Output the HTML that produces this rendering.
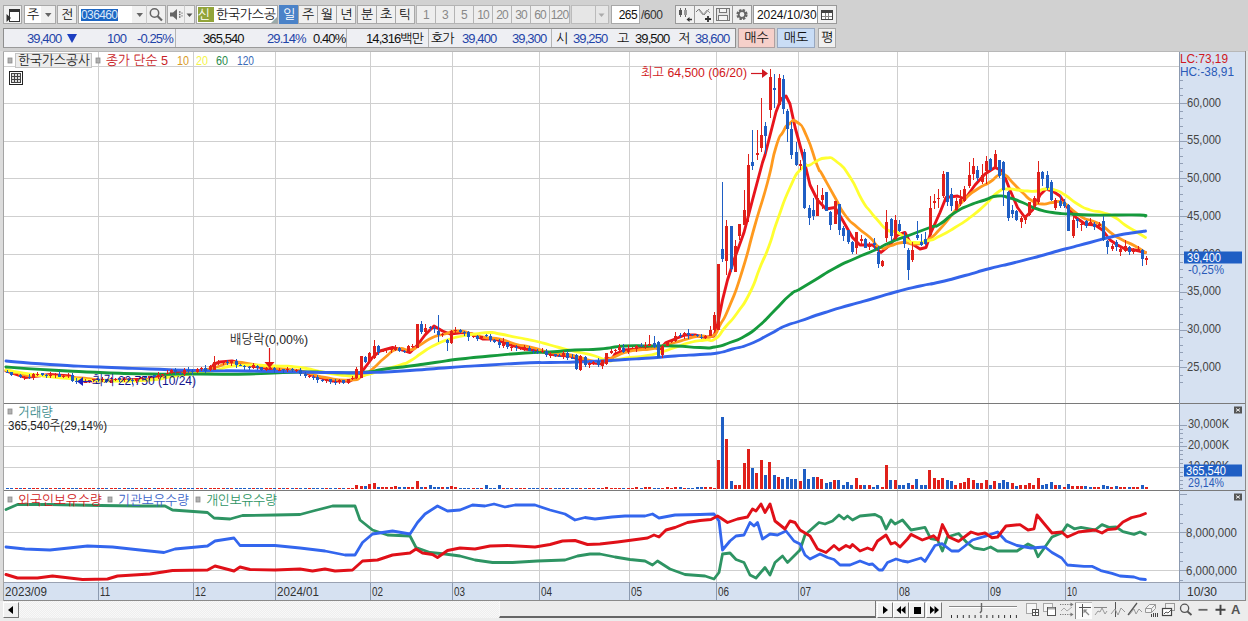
<!DOCTYPE html>
<html lang="ko"><head><meta charset="utf-8"><title>한국가스공사 차트</title>
<style>
html,body{margin:0;padding:0}
body{width:1248px;height:621px;background:#d1d1d1;position:relative;overflow:hidden;font-family:"Liberation Sans","NanumGothic","Noto Sans CJK KR",sans-serif;font-size:12px;color:#111}
.a{position:absolute;box-sizing:border-box;white-space:nowrap}
.btn{background:#f0f0f0;border:1px solid #a8a8a8;text-align:center;line-height:18px;height:19px;top:5px;font-size:13px;overflow:hidden}
.w{background:#fff}
.t2{top:30px;height:18px;line-height:18px;letter-spacing:-0.9px;font-size:13px}
.bl{color:#1f44a8}
</style></head>
<body>
<svg width="1248" height="621" viewBox="0 0 1248 621" style="position:absolute;left:0;top:0" font-family='"Liberation Sans","NanumGothic","Noto Sans CJK KR",sans-serif'><rect x="0" y="51" width="3" height="570" fill="#dcdcdc"/>
<rect x="1246" y="51" width="2" height="570" fill="#e4e4e4"/>
<rect x="3" y="51" width="1243" height="550" fill="#fff"/>
<rect x="1179" y="51" width="66" height="550" fill="#d6e1f1"/>
<rect x="3" y="582" width="1243" height="19" fill="#d6e1f1"/>
<line x1="98.5" y1="52" x2="98.5" y2="582" stroke="#cfcfcf" stroke-width="1"/>
<line x1="98.5" y1="583" x2="98.5" y2="600" stroke="#8c9ab0" stroke-width="1"/>
<line x1="193.5" y1="52" x2="193.5" y2="582" stroke="#cfcfcf" stroke-width="1"/>
<line x1="193.5" y1="583" x2="193.5" y2="600" stroke="#8c9ab0" stroke-width="1"/>
<line x1="275.5" y1="52" x2="275.5" y2="582" stroke="#cfcfcf" stroke-width="1"/>
<line x1="275.5" y1="583" x2="275.5" y2="600" stroke="#8c9ab0" stroke-width="1"/>
<line x1="370.5" y1="52" x2="370.5" y2="582" stroke="#cfcfcf" stroke-width="1"/>
<line x1="370.5" y1="583" x2="370.5" y2="600" stroke="#8c9ab0" stroke-width="1"/>
<line x1="452.5" y1="52" x2="452.5" y2="582" stroke="#cfcfcf" stroke-width="1"/>
<line x1="452.5" y1="583" x2="452.5" y2="600" stroke="#8c9ab0" stroke-width="1"/>
<line x1="539.5" y1="52" x2="539.5" y2="582" stroke="#cfcfcf" stroke-width="1"/>
<line x1="539.5" y1="583" x2="539.5" y2="600" stroke="#8c9ab0" stroke-width="1"/>
<line x1="629.5" y1="52" x2="629.5" y2="582" stroke="#cfcfcf" stroke-width="1"/>
<line x1="629.5" y1="583" x2="629.5" y2="600" stroke="#8c9ab0" stroke-width="1"/>
<line x1="716.5" y1="52" x2="716.5" y2="582" stroke="#cfcfcf" stroke-width="1"/>
<line x1="716.5" y1="583" x2="716.5" y2="600" stroke="#8c9ab0" stroke-width="1"/>
<line x1="798.5" y1="52" x2="798.5" y2="582" stroke="#cfcfcf" stroke-width="1"/>
<line x1="798.5" y1="583" x2="798.5" y2="600" stroke="#8c9ab0" stroke-width="1"/>
<line x1="897.5" y1="52" x2="897.5" y2="582" stroke="#cfcfcf" stroke-width="1"/>
<line x1="897.5" y1="583" x2="897.5" y2="600" stroke="#8c9ab0" stroke-width="1"/>
<line x1="988.5" y1="52" x2="988.5" y2="582" stroke="#cfcfcf" stroke-width="1"/>
<line x1="988.5" y1="583" x2="988.5" y2="600" stroke="#8c9ab0" stroke-width="1"/>
<line x1="1065.5" y1="52" x2="1065.5" y2="582" stroke="#cfcfcf" stroke-width="1"/>
<line x1="1065.5" y1="583" x2="1065.5" y2="600" stroke="#8c9ab0" stroke-width="1"/>
<line x1="4" y1="66.5" x2="1179" y2="66.5" stroke="#cfcfcf" stroke-width="1"/>
<line x1="4" y1="103.5" x2="1179" y2="103.5" stroke="#cfcfcf" stroke-width="1"/>
<line x1="4" y1="141.5" x2="1179" y2="141.5" stroke="#cfcfcf" stroke-width="1"/>
<line x1="4" y1="178.5" x2="1179" y2="178.5" stroke="#cfcfcf" stroke-width="1"/>
<line x1="4" y1="216.5" x2="1179" y2="216.5" stroke="#cfcfcf" stroke-width="1"/>
<line x1="4" y1="254.5" x2="1179" y2="254.5" stroke="#cfcfcf" stroke-width="1"/>
<line x1="4" y1="291.5" x2="1179" y2="291.5" stroke="#cfcfcf" stroke-width="1"/>
<line x1="4" y1="329.5" x2="1179" y2="329.5" stroke="#cfcfcf" stroke-width="1"/>
<line x1="4" y1="366.5" x2="1179" y2="366.5" stroke="#cfcfcf" stroke-width="1"/>
<line x1="4" y1="425.5" x2="1179" y2="425.5" stroke="#cfcfcf" stroke-width="1"/>
<line x1="4" y1="446.5" x2="1179" y2="446.5" stroke="#cfcfcf" stroke-width="1"/>
<line x1="4" y1="467.5" x2="1179" y2="467.5" stroke="#cfcfcf" stroke-width="1"/>
<line x1="4" y1="532.5" x2="1179" y2="532.5" stroke="#cfcfcf" stroke-width="1"/>
<line x1="4" y1="570.5" x2="1179" y2="570.5" stroke="#cfcfcf" stroke-width="1"/>
<line x1="3" y1="403.5" x2="1246" y2="403.5" stroke="#7a7a7a" stroke-width="1"/>
<line x1="3" y1="490.5" x2="1246" y2="490.5" stroke="#7a7a7a" stroke-width="1"/>
<line x1="3" y1="582.5" x2="1246" y2="582.5" stroke="#9aa2b2" stroke-width="1"/>
<line x1="3" y1="600.5" x2="1246" y2="600.5" stroke="#8a8a8a" stroke-width="1"/>
<line x1="3.5" y1="51" x2="3.5" y2="601" stroke="#a4a4a4" stroke-width="1"/>
<line x1="3" y1="51.5" x2="1246" y2="51.5" stroke="#b8b8b8" stroke-width="1"/>
<line x1="1179.5" y1="52" x2="1179.5" y2="601" stroke="#8c9ab0" stroke-width="1"/>
<line x1="1245.5" y1="51" x2="1245.5" y2="601" stroke="#8a8a8a" stroke-width="1"/>
<line x1="1180" y1="382.5" x2="1183" y2="382.5" stroke="#93a0b6" stroke-width="1"/>
<line x1="1180" y1="375.5" x2="1183" y2="375.5" stroke="#93a0b6" stroke-width="1"/>
<line x1="1180" y1="367.5" x2="1187" y2="367.5" stroke="#93a0b6" stroke-width="1"/>
<line x1="1180" y1="360.5" x2="1183" y2="360.5" stroke="#93a0b6" stroke-width="1"/>
<line x1="1180" y1="352.5" x2="1183" y2="352.5" stroke="#93a0b6" stroke-width="1"/>
<line x1="1180" y1="345.5" x2="1183" y2="345.5" stroke="#93a0b6" stroke-width="1"/>
<line x1="1180" y1="337.5" x2="1183" y2="337.5" stroke="#93a0b6" stroke-width="1"/>
<line x1="1180" y1="330.5" x2="1187" y2="330.5" stroke="#93a0b6" stroke-width="1"/>
<line x1="1180" y1="322.5" x2="1183" y2="322.5" stroke="#93a0b6" stroke-width="1"/>
<line x1="1180" y1="314.5" x2="1183" y2="314.5" stroke="#93a0b6" stroke-width="1"/>
<line x1="1180" y1="307.5" x2="1183" y2="307.5" stroke="#93a0b6" stroke-width="1"/>
<line x1="1180" y1="299.5" x2="1183" y2="299.5" stroke="#93a0b6" stroke-width="1"/>
<line x1="1180" y1="292.5" x2="1187" y2="292.5" stroke="#93a0b6" stroke-width="1"/>
<line x1="1180" y1="284.5" x2="1183" y2="284.5" stroke="#93a0b6" stroke-width="1"/>
<line x1="1180" y1="277.5" x2="1183" y2="277.5" stroke="#93a0b6" stroke-width="1"/>
<line x1="1180" y1="269.5" x2="1183" y2="269.5" stroke="#93a0b6" stroke-width="1"/>
<line x1="1180" y1="262.5" x2="1183" y2="262.5" stroke="#93a0b6" stroke-width="1"/>
<line x1="1180" y1="254.5" x2="1187" y2="254.5" stroke="#93a0b6" stroke-width="1"/>
<line x1="1180" y1="246.5" x2="1183" y2="246.5" stroke="#93a0b6" stroke-width="1"/>
<line x1="1180" y1="239.5" x2="1183" y2="239.5" stroke="#93a0b6" stroke-width="1"/>
<line x1="1180" y1="231.5" x2="1183" y2="231.5" stroke="#93a0b6" stroke-width="1"/>
<line x1="1180" y1="224.5" x2="1183" y2="224.5" stroke="#93a0b6" stroke-width="1"/>
<line x1="1180" y1="216.5" x2="1187" y2="216.5" stroke="#93a0b6" stroke-width="1"/>
<line x1="1180" y1="209.5" x2="1183" y2="209.5" stroke="#93a0b6" stroke-width="1"/>
<line x1="1180" y1="201.5" x2="1183" y2="201.5" stroke="#93a0b6" stroke-width="1"/>
<line x1="1180" y1="194.5" x2="1183" y2="194.5" stroke="#93a0b6" stroke-width="1"/>
<line x1="1180" y1="186.5" x2="1183" y2="186.5" stroke="#93a0b6" stroke-width="1"/>
<line x1="1180" y1="178.5" x2="1187" y2="178.5" stroke="#93a0b6" stroke-width="1"/>
<line x1="1180" y1="171.5" x2="1183" y2="171.5" stroke="#93a0b6" stroke-width="1"/>
<line x1="1180" y1="163.5" x2="1183" y2="163.5" stroke="#93a0b6" stroke-width="1"/>
<line x1="1180" y1="156.5" x2="1183" y2="156.5" stroke="#93a0b6" stroke-width="1"/>
<line x1="1180" y1="148.5" x2="1183" y2="148.5" stroke="#93a0b6" stroke-width="1"/>
<line x1="1180" y1="141.5" x2="1187" y2="141.5" stroke="#93a0b6" stroke-width="1"/>
<line x1="1180" y1="133.5" x2="1183" y2="133.5" stroke="#93a0b6" stroke-width="1"/>
<line x1="1180" y1="126.5" x2="1183" y2="126.5" stroke="#93a0b6" stroke-width="1"/>
<line x1="1180" y1="118.5" x2="1183" y2="118.5" stroke="#93a0b6" stroke-width="1"/>
<line x1="1180" y1="111.5" x2="1183" y2="111.5" stroke="#93a0b6" stroke-width="1"/>
<line x1="1180" y1="103.5" x2="1187" y2="103.5" stroke="#93a0b6" stroke-width="1"/>
<line x1="1180" y1="95.5" x2="1183" y2="95.5" stroke="#93a0b6" stroke-width="1"/>
<line x1="1180" y1="88.5" x2="1183" y2="88.5" stroke="#93a0b6" stroke-width="1"/>
<line x1="1180" y1="80.5" x2="1183" y2="80.5" stroke="#93a0b6" stroke-width="1"/>
<line x1="1180" y1="488.5" x2="1183" y2="488.5" stroke="#93a0b6" stroke-width="1"/>
<line x1="1180" y1="484.5" x2="1183" y2="484.5" stroke="#93a0b6" stroke-width="1"/>
<line x1="1180" y1="480.5" x2="1183" y2="480.5" stroke="#93a0b6" stroke-width="1"/>
<line x1="1180" y1="476.5" x2="1183" y2="476.5" stroke="#93a0b6" stroke-width="1"/>
<line x1="1180" y1="472.5" x2="1183" y2="472.5" stroke="#93a0b6" stroke-width="1"/>
<line x1="1180" y1="467.5" x2="1187" y2="467.5" stroke="#93a0b6" stroke-width="1"/>
<line x1="1180" y1="463.5" x2="1183" y2="463.5" stroke="#93a0b6" stroke-width="1"/>
<line x1="1180" y1="459.5" x2="1183" y2="459.5" stroke="#93a0b6" stroke-width="1"/>
<line x1="1180" y1="454.5" x2="1183" y2="454.5" stroke="#93a0b6" stroke-width="1"/>
<line x1="1180" y1="450.5" x2="1183" y2="450.5" stroke="#93a0b6" stroke-width="1"/>
<line x1="1180" y1="446.5" x2="1187" y2="446.5" stroke="#93a0b6" stroke-width="1"/>
<line x1="1180" y1="442.5" x2="1183" y2="442.5" stroke="#93a0b6" stroke-width="1"/>
<line x1="1180" y1="438.5" x2="1183" y2="438.5" stroke="#93a0b6" stroke-width="1"/>
<line x1="1180" y1="433.5" x2="1183" y2="433.5" stroke="#93a0b6" stroke-width="1"/>
<line x1="1180" y1="429.5" x2="1183" y2="429.5" stroke="#93a0b6" stroke-width="1"/>
<line x1="1180" y1="425.5" x2="1187" y2="425.5" stroke="#93a0b6" stroke-width="1"/>
<line x1="1180" y1="580.5" x2="1183" y2="580.5" stroke="#93a0b6" stroke-width="1"/>
<line x1="1180" y1="570.5" x2="1187" y2="570.5" stroke="#93a0b6" stroke-width="1"/>
<line x1="1180" y1="561.5" x2="1183" y2="561.5" stroke="#93a0b6" stroke-width="1"/>
<line x1="1180" y1="552.5" x2="1183" y2="552.5" stroke="#93a0b6" stroke-width="1"/>
<line x1="1180" y1="542.5" x2="1183" y2="542.5" stroke="#93a0b6" stroke-width="1"/>
<line x1="1180" y1="532.5" x2="1187" y2="532.5" stroke="#93a0b6" stroke-width="1"/>
<line x1="1180" y1="523.5" x2="1183" y2="523.5" stroke="#93a0b6" stroke-width="1"/>
<line x1="1180" y1="514.5" x2="1183" y2="514.5" stroke="#93a0b6" stroke-width="1"/>
<line x1="1180" y1="504.5" x2="1183" y2="504.5" stroke="#93a0b6" stroke-width="1"/>
<line x1="1180" y1="494.5" x2="1187" y2="494.5" stroke="#93a0b6" stroke-width="1"/>
<rect x="6.0" y="488" width="3" height="1" fill="#1f5ec4"/>
<rect x="10.0" y="488" width="3" height="1" fill="#1f5ec4"/>
<rect x="15.0" y="488" width="3" height="1" fill="#e0201a"/>
<rect x="19.0" y="488" width="3" height="1" fill="#1f5ec4"/>
<rect x="23.0" y="488" width="3" height="1" fill="#e0201a"/>
<rect x="28.0" y="488" width="3" height="1" fill="#1f5ec4"/>
<rect x="32.0" y="488" width="3" height="1" fill="#e0201a"/>
<rect x="36.0" y="488" width="3" height="1" fill="#e0201a"/>
<rect x="41.0" y="488" width="3" height="1" fill="#1f5ec4"/>
<rect x="45.0" y="488" width="3" height="1" fill="#1f5ec4"/>
<rect x="49.0" y="488" width="3" height="1" fill="#e0201a"/>
<rect x="54.0" y="488" width="3" height="1" fill="#e0201a"/>
<rect x="58.0" y="488" width="3" height="1" fill="#1f5ec4"/>
<rect x="62.0" y="488" width="3" height="1" fill="#e0201a"/>
<rect x="67.0" y="488" width="3" height="1" fill="#e0201a"/>
<rect x="71.0" y="488" width="3" height="1" fill="#1f5ec4"/>
<rect x="75.0" y="488" width="3" height="1" fill="#1f5ec4"/>
<rect x="79.0" y="488" width="3" height="1" fill="#e0201a"/>
<rect x="84.0" y="488" width="3" height="1" fill="#e0201a"/>
<rect x="88.0" y="488" width="3" height="1" fill="#e0201a"/>
<rect x="92.0" y="488" width="3" height="1" fill="#e0201a"/>
<rect x="97.0" y="488" width="3" height="1" fill="#1f5ec4"/>
<rect x="101.0" y="488" width="3" height="1" fill="#e0201a"/>
<rect x="105.0" y="488" width="3" height="1" fill="#1f5ec4"/>
<rect x="110.0" y="488" width="3" height="1" fill="#e0201a"/>
<rect x="114.0" y="488" width="3" height="1" fill="#e0201a"/>
<rect x="118.0" y="488" width="3" height="1" fill="#1f5ec4"/>
<rect x="123.0" y="488" width="3" height="1" fill="#e0201a"/>
<rect x="127.0" y="488" width="3" height="1" fill="#1f5ec4"/>
<rect x="131.0" y="488" width="3" height="1" fill="#1f5ec4"/>
<rect x="135.0" y="488" width="3" height="1" fill="#e0201a"/>
<rect x="140.0" y="488" width="3" height="1" fill="#e0201a"/>
<rect x="144.0" y="488" width="3" height="1" fill="#1f5ec4"/>
<rect x="148.0" y="488" width="3" height="1" fill="#e0201a"/>
<rect x="153.0" y="488" width="3" height="1" fill="#1f5ec4"/>
<rect x="157.0" y="488" width="3" height="1" fill="#e0201a"/>
<rect x="161.0" y="488" width="3" height="1" fill="#e0201a"/>
<rect x="166.0" y="488" width="3" height="1" fill="#e0201a"/>
<rect x="170.0" y="488" width="3" height="1" fill="#e0201a"/>
<rect x="174.0" y="488" width="3" height="1" fill="#1f5ec4"/>
<rect x="179.0" y="488" width="3" height="1" fill="#1f5ec4"/>
<rect x="183.0" y="488" width="3" height="1" fill="#e0201a"/>
<rect x="187.0" y="488" width="3" height="1" fill="#1f5ec4"/>
<rect x="191.0" y="488" width="3" height="1" fill="#1f5ec4"/>
<rect x="196.0" y="488" width="3" height="1" fill="#e0201a"/>
<rect x="200.0" y="488" width="3" height="1" fill="#e0201a"/>
<rect x="204.0" y="488" width="3" height="1" fill="#1f5ec4"/>
<rect x="209.0" y="488" width="3" height="1" fill="#e0201a"/>
<rect x="213.0" y="488" width="3" height="1" fill="#e0201a"/>
<rect x="217.0" y="488" width="3" height="1" fill="#e0201a"/>
<rect x="222.0" y="488" width="3" height="1" fill="#e0201a"/>
<rect x="226.0" y="488" width="3" height="1" fill="#1f5ec4"/>
<rect x="230.0" y="488" width="3" height="1" fill="#e0201a"/>
<rect x="235.0" y="488" width="3" height="1" fill="#1f5ec4"/>
<rect x="239.0" y="488" width="3" height="1" fill="#1f5ec4"/>
<rect x="243.0" y="488" width="3" height="1" fill="#1f5ec4"/>
<rect x="248.0" y="488" width="3" height="1" fill="#1f5ec4"/>
<rect x="252.0" y="488" width="3" height="1" fill="#e0201a"/>
<rect x="256.0" y="488" width="3" height="1" fill="#1f5ec4"/>
<rect x="260.0" y="488" width="3" height="1" fill="#1f5ec4"/>
<rect x="265.0" y="488" width="3" height="1" fill="#e0201a"/>
<rect x="269.0" y="488" width="3" height="1" fill="#e0201a"/>
<rect x="273.0" y="488" width="3" height="1" fill="#1f5ec4"/>
<rect x="278.0" y="488" width="3" height="1" fill="#e0201a"/>
<rect x="282.0" y="488" width="3" height="1" fill="#1f5ec4"/>
<rect x="286.0" y="488" width="3" height="1" fill="#e0201a"/>
<rect x="291.0" y="488" width="3" height="1" fill="#1f5ec4"/>
<rect x="295.0" y="488" width="3" height="1" fill="#e0201a"/>
<rect x="299.0" y="488" width="3" height="1" fill="#1f5ec4"/>
<rect x="304.0" y="488" width="3" height="1" fill="#1f5ec4"/>
<rect x="308.0" y="488" width="3" height="1" fill="#e0201a"/>
<rect x="312.0" y="488" width="3" height="1" fill="#1f5ec4"/>
<rect x="316.0" y="488" width="3" height="1" fill="#1f5ec4"/>
<rect x="321.0" y="488" width="3" height="1" fill="#1f5ec4"/>
<rect x="325.0" y="488" width="3" height="1" fill="#e0201a"/>
<rect x="329.0" y="488" width="3" height="1" fill="#1f5ec4"/>
<rect x="334.0" y="488" width="3" height="1" fill="#1f5ec4"/>
<rect x="338.0" y="488" width="3" height="1" fill="#e0201a"/>
<rect x="342.0" y="488" width="3" height="1" fill="#1f5ec4"/>
<rect x="347.0" y="488" width="3" height="1" fill="#e0201a"/>
<rect x="351.0" y="488" width="3" height="1" fill="#e0201a"/>
<rect x="355.0" y="485" width="3" height="4" fill="#e0201a"/>
<rect x="360.0" y="486" width="3" height="3" fill="#e0201a"/>
<rect x="364.0" y="486" width="3" height="3" fill="#1f5ec4"/>
<rect x="368.0" y="484" width="3" height="5" fill="#e0201a"/>
<rect x="373.0" y="483" width="3" height="6" fill="#e0201a"/>
<rect x="377.0" y="487" width="3" height="2" fill="#1f5ec4"/>
<rect x="381.0" y="487" width="3" height="2" fill="#e0201a"/>
<rect x="385.0" y="487" width="3" height="2" fill="#e0201a"/>
<rect x="390.0" y="487" width="3" height="2" fill="#e0201a"/>
<rect x="394.0" y="486" width="3" height="3" fill="#e0201a"/>
<rect x="398.0" y="487" width="3" height="2" fill="#1f5ec4"/>
<rect x="403.0" y="487" width="3" height="2" fill="#1f5ec4"/>
<rect x="407.0" y="487" width="3" height="2" fill="#e0201a"/>
<rect x="411.0" y="487" width="3" height="2" fill="#e0201a"/>
<rect x="416.0" y="481" width="3" height="8" fill="#e0201a"/>
<rect x="420.0" y="487" width="3" height="2" fill="#1f5ec4"/>
<rect x="424.0" y="487" width="3" height="2" fill="#e0201a"/>
<rect x="429.0" y="485" width="3" height="4" fill="#1f5ec4"/>
<rect x="433.0" y="487" width="3" height="2" fill="#1f5ec4"/>
<rect x="437.0" y="487" width="3" height="2" fill="#1f5ec4"/>
<rect x="441.0" y="487" width="3" height="2" fill="#e0201a"/>
<rect x="446.0" y="487" width="3" height="2" fill="#1f5ec4"/>
<rect x="450.0" y="486" width="3" height="3" fill="#e0201a"/>
<rect x="454.0" y="487" width="3" height="2" fill="#e0201a"/>
<rect x="459.0" y="488" width="3" height="1" fill="#1f5ec4"/>
<rect x="463.0" y="488" width="3" height="1" fill="#1f5ec4"/>
<rect x="467.0" y="488" width="3" height="1" fill="#1f5ec4"/>
<rect x="472.0" y="488" width="3" height="1" fill="#e0201a"/>
<rect x="476.0" y="488" width="3" height="1" fill="#1f5ec4"/>
<rect x="480.0" y="488" width="3" height="1" fill="#e0201a"/>
<rect x="485.0" y="485" width="3" height="4" fill="#1f5ec4"/>
<rect x="489.0" y="488" width="3" height="1" fill="#1f5ec4"/>
<rect x="493.0" y="488" width="3" height="1" fill="#1f5ec4"/>
<rect x="498.0" y="485" width="3" height="4" fill="#1f5ec4"/>
<rect x="502.0" y="488" width="3" height="1" fill="#e0201a"/>
<rect x="506.0" y="488" width="3" height="1" fill="#1f5ec4"/>
<rect x="510.0" y="488" width="3" height="1" fill="#e0201a"/>
<rect x="515.0" y="488" width="3" height="1" fill="#1f5ec4"/>
<rect x="519.0" y="488" width="3" height="1" fill="#e0201a"/>
<rect x="523.0" y="488" width="3" height="1" fill="#e0201a"/>
<rect x="528.0" y="488" width="3" height="1" fill="#1f5ec4"/>
<rect x="532.0" y="488" width="3" height="1" fill="#1f5ec4"/>
<rect x="536.0" y="488" width="3" height="1" fill="#1f5ec4"/>
<rect x="541.0" y="488" width="3" height="1" fill="#e0201a"/>
<rect x="545.0" y="488" width="3" height="1" fill="#1f5ec4"/>
<rect x="549.0" y="488" width="3" height="1" fill="#e0201a"/>
<rect x="554.0" y="488" width="3" height="1" fill="#1f5ec4"/>
<rect x="558.0" y="488" width="3" height="1" fill="#1f5ec4"/>
<rect x="562.0" y="488" width="3" height="1" fill="#e0201a"/>
<rect x="566.0" y="488" width="3" height="1" fill="#1f5ec4"/>
<rect x="571.0" y="488" width="3" height="1" fill="#1f5ec4"/>
<rect x="575.0" y="488" width="3" height="1" fill="#1f5ec4"/>
<rect x="579.0" y="488" width="3" height="1" fill="#e0201a"/>
<rect x="584.0" y="488" width="3" height="1" fill="#1f5ec4"/>
<rect x="588.0" y="488" width="3" height="1" fill="#e0201a"/>
<rect x="592.0" y="488" width="3" height="1" fill="#e0201a"/>
<rect x="597.0" y="488" width="3" height="1" fill="#1f5ec4"/>
<rect x="601.0" y="488" width="3" height="1" fill="#e0201a"/>
<rect x="605.0" y="487" width="3" height="2" fill="#e0201a"/>
<rect x="610.0" y="488" width="3" height="1" fill="#e0201a"/>
<rect x="614.0" y="488" width="3" height="1" fill="#e0201a"/>
<rect x="618.0" y="488" width="3" height="1" fill="#e0201a"/>
<rect x="622.0" y="488" width="3" height="1" fill="#1f5ec4"/>
<rect x="627.0" y="488" width="3" height="1" fill="#e0201a"/>
<rect x="631.0" y="488" width="3" height="1" fill="#e0201a"/>
<rect x="635.0" y="487" width="3" height="2" fill="#e0201a"/>
<rect x="640.0" y="488" width="3" height="1" fill="#1f5ec4"/>
<rect x="644.0" y="487" width="3" height="2" fill="#e0201a"/>
<rect x="648.0" y="487" width="3" height="2" fill="#e0201a"/>
<rect x="653.0" y="488" width="3" height="1" fill="#1f5ec4"/>
<rect x="657.0" y="488" width="3" height="1" fill="#1f5ec4"/>
<rect x="661.0" y="488" width="3" height="1" fill="#e0201a"/>
<rect x="666.0" y="487" width="3" height="2" fill="#e0201a"/>
<rect x="670.0" y="488" width="3" height="1" fill="#e0201a"/>
<rect x="674.0" y="487" width="3" height="2" fill="#e0201a"/>
<rect x="679.0" y="487" width="3" height="2" fill="#1f5ec4"/>
<rect x="683.0" y="488" width="3" height="1" fill="#e0201a"/>
<rect x="687.0" y="488" width="3" height="1" fill="#1f5ec4"/>
<rect x="691.0" y="488" width="3" height="1" fill="#1f5ec4"/>
<rect x="696.0" y="487" width="3" height="2" fill="#1f5ec4"/>
<rect x="700.0" y="487" width="3" height="2" fill="#1f5ec4"/>
<rect x="704.0" y="487" width="3" height="2" fill="#e0201a"/>
<rect x="709.0" y="487" width="3" height="2" fill="#e0201a"/>
<rect x="713.0" y="488" width="3" height="1" fill="#e0201a"/>
<rect x="717.0" y="460" width="3" height="29" fill="#e0201a"/>
<rect x="721.0" y="417" width="3" height="72" fill="#1f5ec4"/>
<rect x="725.0" y="439" width="3" height="50" fill="#e0201a"/>
<rect x="730.0" y="481" width="3" height="8" fill="#1f5ec4"/>
<rect x="734.0" y="485" width="3" height="4" fill="#e0201a"/>
<rect x="738.0" y="485" width="3" height="4" fill="#e0201a"/>
<rect x="743.0" y="463" width="3" height="26" fill="#e0201a"/>
<rect x="747.0" y="449" width="3" height="40" fill="#e0201a"/>
<rect x="751.0" y="468" width="3" height="21" fill="#1f5ec4"/>
<rect x="755.0" y="473" width="3" height="16" fill="#e0201a"/>
<rect x="760.0" y="460" width="3" height="29" fill="#e0201a"/>
<rect x="764.0" y="475" width="3" height="14" fill="#1f5ec4"/>
<rect x="768.0" y="462" width="3" height="27" fill="#e0201a"/>
<rect x="773.0" y="475" width="3" height="14" fill="#1f5ec4"/>
<rect x="777.0" y="477" width="3" height="12" fill="#e0201a"/>
<rect x="781.0" y="479" width="3" height="10" fill="#1f5ec4"/>
<rect x="786.0" y="477" width="3" height="12" fill="#1f5ec4"/>
<rect x="790.0" y="479" width="3" height="10" fill="#1f5ec4"/>
<rect x="794.0" y="479" width="3" height="10" fill="#1f5ec4"/>
<rect x="799.0" y="481" width="3" height="8" fill="#e0201a"/>
<rect x="803.0" y="469" width="3" height="20" fill="#1f5ec4"/>
<rect x="807.0" y="479" width="3" height="10" fill="#1f5ec4"/>
<rect x="812.0" y="477" width="3" height="12" fill="#1f5ec4"/>
<rect x="816.0" y="477" width="3" height="12" fill="#e0201a"/>
<rect x="820.0" y="479" width="3" height="10" fill="#e0201a"/>
<rect x="825.0" y="483" width="3" height="6" fill="#1f5ec4"/>
<rect x="829.0" y="482" width="3" height="7" fill="#1f5ec4"/>
<rect x="833.0" y="480" width="3" height="9" fill="#e0201a"/>
<rect x="837.0" y="480" width="3" height="9" fill="#1f5ec4"/>
<rect x="842.0" y="485" width="3" height="4" fill="#1f5ec4"/>
<rect x="846.0" y="482" width="3" height="7" fill="#1f5ec4"/>
<rect x="850.0" y="485" width="3" height="4" fill="#1f5ec4"/>
<rect x="855.0" y="478" width="3" height="11" fill="#e0201a"/>
<rect x="859.0" y="485" width="3" height="4" fill="#e0201a"/>
<rect x="863.0" y="485" width="3" height="4" fill="#1f5ec4"/>
<rect x="868.0" y="485" width="3" height="4" fill="#e0201a"/>
<rect x="872.0" y="487" width="3" height="2" fill="#1f5ec4"/>
<rect x="876.0" y="485" width="3" height="4" fill="#1f5ec4"/>
<rect x="881.0" y="487" width="3" height="2" fill="#e0201a"/>
<rect x="885.0" y="465" width="3" height="24" fill="#e0201a"/>
<rect x="889.0" y="480" width="3" height="9" fill="#1f5ec4"/>
<rect x="894.0" y="480" width="3" height="9" fill="#e0201a"/>
<rect x="898.0" y="485" width="3" height="4" fill="#1f5ec4"/>
<rect x="902.0" y="485" width="3" height="4" fill="#1f5ec4"/>
<rect x="907.0" y="483" width="3" height="6" fill="#1f5ec4"/>
<rect x="911.0" y="485" width="3" height="4" fill="#e0201a"/>
<rect x="915.0" y="479" width="3" height="10" fill="#1f5ec4"/>
<rect x="920.0" y="485" width="3" height="4" fill="#1f5ec4"/>
<rect x="924.0" y="485" width="3" height="4" fill="#1f5ec4"/>
<rect x="928.0" y="470" width="3" height="19" fill="#e0201a"/>
<rect x="933.0" y="478" width="3" height="11" fill="#e0201a"/>
<rect x="937.0" y="480" width="3" height="9" fill="#e0201a"/>
<rect x="941.0" y="478" width="3" height="11" fill="#e0201a"/>
<rect x="946.0" y="480" width="3" height="9" fill="#1f5ec4"/>
<rect x="950.0" y="481" width="3" height="8" fill="#1f5ec4"/>
<rect x="954.0" y="485" width="3" height="4" fill="#e0201a"/>
<rect x="959.0" y="483" width="3" height="6" fill="#e0201a"/>
<rect x="963.0" y="482" width="3" height="7" fill="#e0201a"/>
<rect x="967.0" y="478" width="3" height="11" fill="#e0201a"/>
<rect x="972.0" y="480" width="3" height="9" fill="#e0201a"/>
<rect x="976.0" y="483" width="3" height="6" fill="#1f5ec4"/>
<rect x="980.0" y="483" width="3" height="6" fill="#e0201a"/>
<rect x="985.0" y="480" width="3" height="9" fill="#e0201a"/>
<rect x="989.0" y="485" width="3" height="4" fill="#1f5ec4"/>
<rect x="993.0" y="481" width="3" height="8" fill="#e0201a"/>
<rect x="998.0" y="483" width="3" height="6" fill="#1f5ec4"/>
<rect x="1002.0" y="480" width="3" height="9" fill="#1f5ec4"/>
<rect x="1006.0" y="482" width="3" height="7" fill="#1f5ec4"/>
<rect x="1011.0" y="483" width="3" height="6" fill="#e0201a"/>
<rect x="1015.0" y="486" width="3" height="3" fill="#1f5ec4"/>
<rect x="1019.0" y="485" width="3" height="4" fill="#e0201a"/>
<rect x="1024.0" y="485" width="3" height="4" fill="#e0201a"/>
<rect x="1028.0" y="483" width="3" height="6" fill="#e0201a"/>
<rect x="1032.0" y="485" width="3" height="4" fill="#e0201a"/>
<rect x="1037.0" y="478" width="3" height="11" fill="#e0201a"/>
<rect x="1041.0" y="485" width="3" height="4" fill="#1f5ec4"/>
<rect x="1045.0" y="484" width="3" height="5" fill="#1f5ec4"/>
<rect x="1050.0" y="482" width="3" height="7" fill="#1f5ec4"/>
<rect x="1054.0" y="485" width="3" height="4" fill="#e0201a"/>
<rect x="1058.0" y="485" width="3" height="4" fill="#1f5ec4"/>
<rect x="1063.0" y="487" width="3" height="2" fill="#e0201a"/>
<rect x="1067.0" y="484" width="3" height="5" fill="#1f5ec4"/>
<rect x="1071.0" y="486" width="3" height="3" fill="#e0201a"/>
<rect x="1076.0" y="486" width="3" height="3" fill="#e0201a"/>
<rect x="1080.0" y="486" width="3" height="3" fill="#e0201a"/>
<rect x="1084.0" y="486" width="3" height="3" fill="#1f5ec4"/>
<rect x="1089.0" y="487" width="3" height="2" fill="#1f5ec4"/>
<rect x="1093.0" y="487" width="3" height="2" fill="#e0201a"/>
<rect x="1097.0" y="487" width="3" height="2" fill="#e0201a"/>
<rect x="1102.0" y="485" width="3" height="4" fill="#1f5ec4"/>
<rect x="1106.0" y="486" width="3" height="3" fill="#1f5ec4"/>
<rect x="1110.0" y="487" width="3" height="2" fill="#e0201a"/>
<rect x="1115.0" y="486" width="3" height="3" fill="#1f5ec4"/>
<rect x="1119.0" y="487" width="3" height="2" fill="#e0201a"/>
<rect x="1123.0" y="487" width="3" height="2" fill="#e0201a"/>
<rect x="1128.0" y="487" width="3" height="2" fill="#1f5ec4"/>
<rect x="1132.0" y="487" width="3" height="2" fill="#e0201a"/>
<rect x="1136.0" y="487" width="3" height="2" fill="#e0201a"/>
<rect x="1141.0" y="485" width="3" height="4" fill="#1f5ec4"/>
<rect x="1145.0" y="487" width="3" height="2" fill="#e0201a"/>
<polyline points="6.0,371.0 25.0,377.5 50.0,374.5 70.0,376.0 82.0,381.0 112.0,380.5 150.0,379.0 175.0,372.5 210.0,370.0 214.0,364.0 220.0,362.0 232.0,361.0 250.0,365.5 270.0,369.0 300.0,371.0 315.0,376.0 332.5,381.0 350.0,381.0 359.0,376.0 362.5,371.0 372.5,357.5 380.0,351.0 392.5,347.5 402.5,350.0 410.0,352.5 417.5,345.0 425.0,335.0 434.0,326.0 442.5,331.0 450.0,334.0 462.5,332.5 472.5,334.0 482.5,339.0 495.0,339.0 507.5,344.0 525.0,349.0 540.0,351.0 555.0,355.0 570.0,356.0 580.0,360.0 590.0,362.5 602.5,364.0 606.0,358.0 612.0,359.0 615.0,354.0 625.0,350.0 637.5,349.0 650.0,346.0 660.0,349.0 666.0,342.5 675.0,339.0 685.0,335.0 695.0,335.0 705.0,337.5 714.0,336.0 717.5,325.0 722.5,300.0 727.5,280.0 734.0,260.0 744.0,232.5 752.5,200.0 762.5,162.5 765.0,155.0 776.0,112.0 781.0,99.0 786.0,96.0 790.0,104.0 795.0,127.0 804.0,160.0 810.0,185.0 817.5,200.0 826.0,209.0 835.0,207.5 842.5,220.0 852.5,237.5 860.0,245.0 872.5,245.0 881.0,252.5 890.0,245.0 897.5,235.0 905.0,232.5 910.0,242.5 920.0,249.0 926.0,247.5 931.0,232.5 940.0,212.5 946.0,197.5 957.5,196.0 965.0,199.0 975.0,185.0 985.0,174.0 995.0,167.5 1002.5,171.0 1010.0,190.0 1017.5,207.5 1025.0,217.5 1032.5,210.0 1040.0,195.0 1046.0,189.0 1052.5,191.0 1060.0,196.0 1067.5,207.5 1076.0,217.5 1085.0,224.0 1095.0,225.0 1102.5,230.0 1110.0,240.0 1117.5,245.0 1125.0,249.0 1135.0,250.0 1145.5,252.5" fill="none" stroke="#e8141c" stroke-width="2.9" stroke-linejoin="round" stroke-linecap="round"/>
<path d="M6.0 370.0C12.3 371.7 10.3 373.0 25.0 375.0C39.7 377.0 31.7 375.0 50.0 376.0C68.3 377.0 59.3 376.5 80.0 378.0C100.7 379.5 88.7 380.0 112.0 380.5C135.3 381.0 129.0 381.3 150.0 379.5C171.0 377.7 158.3 377.8 175.0 375.0C191.7 372.2 186.7 373.5 200.0 371.0C213.3 368.5 204.3 370.3 215.0 367.5C225.7 364.7 220.3 363.7 232.0 362.5C243.7 361.3 237.3 362.3 250.0 364.0C262.7 365.7 253.3 365.2 270.0 367.5C286.7 369.8 281.7 367.7 300.0 371.0C318.3 374.3 308.3 374.5 325.0 377.5C341.7 380.5 337.5 380.5 350.0 380.0C362.5 379.5 355.0 379.7 362.5 376.0C370.0 372.3 365.0 375.2 372.5 369.0C380.0 362.8 376.7 364.2 385.0 357.5C393.3 350.8 389.2 351.5 397.5 349.0C405.8 346.5 402.5 351.3 410.0 350.0C417.5 348.7 412.5 349.2 420.0 345.0C427.5 340.8 424.2 341.2 432.5 337.5C440.8 333.8 436.7 336.2 445.0 334.0C453.3 331.8 448.3 331.0 457.5 331.0C466.7 331.0 463.3 331.8 472.5 334.0C481.7 336.2 475.8 335.8 485.0 337.5C494.2 339.2 490.0 336.8 500.0 339.0C510.0 341.2 504.2 341.2 515.0 344.0C525.8 346.8 520.8 344.7 532.5 347.5C544.2 350.3 537.5 350.0 550.0 352.5C562.5 355.0 558.3 352.8 570.0 355.0C581.7 357.2 575.0 356.8 585.0 359.0C595.0 361.2 590.8 362.0 600.0 361.5C609.2 361.0 604.2 360.5 612.5 357.5C620.8 354.5 616.7 355.0 625.0 352.5C633.3 350.0 629.2 351.2 637.5 350.0C645.8 348.8 641.7 350.3 650.0 349.0C658.3 347.7 654.2 348.2 662.5 346.0C670.8 343.8 666.7 344.8 675.0 342.5C683.3 340.2 679.2 341.2 687.5 339.0C695.8 336.8 691.7 337.0 700.0 336.0C708.3 335.0 705.8 339.7 712.5 336.0C719.2 332.3 714.2 335.3 720.0 325.0C725.8 314.7 722.5 323.3 730.0 305.0C737.5 286.7 734.2 296.7 742.5 270.0C750.8 243.3 746.7 254.2 755.0 225.0C763.3 195.8 760.5 208.5 767.5 182.5C774.5 156.5 770.8 163.8 776.0 147.0C781.2 130.2 778.7 139.7 783.0 132.0C787.3 124.3 784.2 127.2 789.0 124.0C793.8 120.8 791.5 118.2 797.5 122.5C803.5 126.8 800.5 122.8 807.0 137.0C813.5 151.2 811.8 152.3 817.0 165.0C822.2 177.7 816.5 164.2 822.5 175.0C828.5 185.8 827.5 184.2 835.0 197.5C842.5 210.8 837.5 205.0 845.0 215.0C852.5 225.0 849.2 220.0 857.5 227.5C865.8 235.0 862.5 230.8 870.0 237.5C877.5 244.2 873.3 244.7 880.0 247.5C886.7 250.3 882.5 247.7 890.0 246.0C897.5 244.3 894.2 243.2 902.5 242.5C910.8 241.8 906.7 244.8 915.0 244.0C923.3 243.2 919.2 245.0 927.5 240.0C935.8 235.0 931.7 237.7 940.0 229.0C948.3 220.3 944.2 224.0 952.5 214.0C960.8 204.0 956.7 207.3 965.0 199.0C973.3 190.7 969.2 194.7 977.5 189.0C985.8 183.3 982.9 186.7 990.0 182.0C997.1 177.3 993.8 177.3 998.8 175.0C1003.8 172.7 1000.4 172.5 1005.0 175.0C1009.6 177.5 1006.7 176.7 1012.5 182.5C1018.3 188.3 1015.8 186.3 1022.5 192.5C1029.2 198.7 1025.8 197.2 1032.5 201.0C1039.2 204.8 1035.8 203.5 1042.5 204.0C1049.2 204.5 1045.8 203.0 1052.5 202.5C1059.2 202.0 1055.8 200.0 1062.5 202.5C1069.2 205.0 1065.8 205.0 1072.5 210.0C1079.2 215.0 1075.8 213.8 1082.5 217.5C1089.2 221.2 1085.8 218.2 1092.5 221.0C1099.2 223.8 1095.8 221.7 1102.5 226.0C1109.2 230.3 1105.8 229.3 1112.5 234.0C1119.2 238.7 1115.0 236.0 1122.5 240.0C1130.0 244.0 1127.3 241.8 1135.0 246.0C1142.7 250.2 1142.0 250.3 1145.5 252.5" fill="none" stroke="#ff9a1e" stroke-width="2.8" stroke-linejoin="round" stroke-linecap="round"/>
<path d="M6.0 370.0C16.5 371.7 14.5 372.0 37.5 375.0C60.5 378.0 50.2 377.0 75.0 379.0C99.8 381.0 87.0 380.7 112.0 381.0C137.0 381.3 129.0 381.7 150.0 380.0C171.0 378.3 154.3 379.0 175.0 376.0C195.7 373.0 191.3 374.5 212.0 371.0C232.7 367.5 216.0 367.2 237.0 365.5C258.0 363.8 254.0 365.3 275.0 366.0C296.0 366.7 283.3 365.3 300.0 367.5C316.7 369.7 308.3 369.7 325.0 372.5C341.7 375.3 336.7 375.2 350.0 376.0C363.3 376.8 354.2 377.0 365.0 375.0C375.8 373.0 370.8 373.3 382.5 370.0C394.2 366.7 390.8 368.0 400.0 365.0C409.2 362.0 402.5 365.2 410.0 361.0C417.5 356.8 414.2 357.8 422.5 352.5C430.8 347.2 425.8 349.5 435.0 345.0C444.2 340.5 440.8 342.0 450.0 339.0C459.2 336.0 454.2 337.7 462.5 336.0C470.8 334.3 465.8 335.2 475.0 334.0C484.2 332.8 481.7 332.5 490.0 332.5C498.3 332.5 490.8 332.3 500.0 334.0C509.2 335.7 505.8 335.2 517.5 337.5C529.2 339.8 524.2 338.5 535.0 341.0C545.8 343.5 540.0 342.3 550.0 345.0C560.0 347.7 555.0 346.5 565.0 349.0C575.0 351.5 570.0 350.2 580.0 352.5C590.0 354.8 586.0 353.3 595.0 356.0C604.0 358.7 600.3 359.2 607.0 360.5C613.7 361.8 607.3 361.0 615.0 360.0C622.7 359.0 620.0 358.8 630.0 357.5C640.0 356.2 635.0 357.7 645.0 356.0C655.0 354.3 650.0 355.3 660.0 352.5C670.0 349.7 665.0 350.8 675.0 347.5C685.0 344.2 680.0 345.0 690.0 342.5C700.0 340.0 696.7 341.2 705.0 340.0C713.3 338.8 708.3 343.2 715.0 339.0C721.7 334.8 717.5 336.3 725.0 327.5C732.5 318.7 729.2 324.2 737.5 312.5C745.8 300.8 742.5 307.5 750.0 292.5C757.5 277.5 753.7 283.0 760.0 267.5C766.3 252.0 763.2 261.8 769.0 246.0C774.8 230.2 770.5 239.5 777.5 220.0C784.5 200.5 782.2 204.5 790.0 187.5C797.8 170.5 794.3 176.5 801.0 169.0C807.7 161.5 805.3 167.3 810.0 165.0C814.7 162.7 809.7 164.3 815.0 162.0C820.3 159.7 818.7 158.0 826.0 158.0C833.3 158.0 829.0 155.7 837.0 162.0C845.0 168.3 841.7 164.3 850.0 177.0C858.3 189.7 855.3 188.7 862.0 200.0C868.7 211.3 864.8 204.3 870.0 211.0C875.2 217.7 871.7 213.7 877.5 220.0C883.3 226.3 880.8 225.8 887.5 230.0C894.2 234.2 890.8 229.2 897.5 232.5C904.2 235.8 901.7 236.7 907.5 240.0C913.3 243.3 908.3 242.2 915.0 242.5C921.7 242.8 919.2 243.2 927.5 241.0C935.8 238.8 930.8 240.5 940.0 236.0C949.2 231.5 945.0 233.7 955.0 227.5C965.0 221.3 960.0 225.0 970.0 217.5C980.0 210.0 975.8 213.3 985.0 205.0C994.2 196.7 990.0 197.8 997.5 192.5C1005.0 187.2 1000.8 189.8 1007.5 189.0C1014.2 188.2 1010.8 189.3 1017.5 190.0C1024.2 190.7 1020.8 190.7 1027.5 191.0C1034.2 191.3 1031.7 191.7 1037.5 191.0C1043.3 190.3 1039.2 189.3 1045.0 189.0C1050.8 188.7 1048.3 188.0 1055.0 190.0C1061.7 192.0 1057.5 190.3 1065.0 195.0C1072.5 199.7 1069.2 199.0 1077.5 204.0C1085.8 209.0 1081.7 207.2 1090.0 210.0C1098.3 212.8 1094.2 210.0 1102.5 212.5C1110.8 215.0 1107.5 213.3 1115.0 217.5C1122.5 221.7 1118.3 220.5 1125.0 225.0C1131.7 229.5 1128.2 226.8 1135.0 231.0C1141.8 235.2 1142.0 235.3 1145.5 237.5" fill="none" stroke="#ffff30" stroke-width="2.8" stroke-linejoin="round" stroke-linecap="round"/>
<path d="M6.0 367.0C20.7 368.0 18.7 368.2 50.0 370.0C81.3 371.8 66.7 371.2 100.0 372.5C133.3 373.8 116.7 373.5 150.0 374.0C183.3 374.5 166.7 374.0 200.0 374.0C233.3 374.0 216.7 374.7 250.0 374.0C283.3 373.3 273.3 372.5 300.0 372.0C326.7 371.5 309.2 372.3 330.0 372.5C350.8 372.7 344.2 373.7 362.5 372.5C380.8 371.3 369.2 371.2 385.0 369.0C400.8 366.8 393.3 368.2 410.0 366.0C426.7 363.8 418.3 364.8 435.0 362.5C451.7 360.2 441.7 361.2 460.0 359.0C478.3 356.8 468.3 358.0 490.0 356.0C511.7 354.0 505.0 354.3 525.0 353.0C545.0 351.7 533.3 353.0 550.0 352.0C566.7 351.0 558.3 351.0 575.0 350.0C591.7 349.0 583.3 350.3 600.0 349.0C616.7 347.7 608.3 347.0 625.0 346.0C641.7 345.0 633.3 346.0 650.0 346.0C666.7 346.0 658.3 345.5 675.0 346.0C691.7 346.5 686.7 347.2 700.0 347.5C713.3 347.8 705.0 348.7 715.0 347.0C725.0 345.3 720.0 346.2 730.0 342.5C740.0 338.8 735.0 341.8 745.0 336.0C755.0 330.2 750.0 333.7 760.0 325.0C770.0 316.3 765.0 320.0 775.0 310.0C785.0 300.0 781.7 302.0 790.0 295.0C798.3 288.0 791.7 294.0 800.0 289.0C808.3 284.0 803.3 287.0 815.0 280.0C826.7 273.0 821.7 275.2 835.0 268.0C848.3 260.8 841.7 264.5 855.0 258.5C868.3 252.5 863.3 255.3 875.0 250.0C886.7 244.7 878.3 247.5 890.0 242.5C901.7 237.5 896.7 240.0 910.0 235.0C923.3 230.0 920.0 231.2 930.0 227.5C940.0 223.8 931.7 229.0 940.0 224.0C948.3 219.0 945.0 218.8 955.0 212.5C965.0 206.2 960.0 209.2 970.0 205.0C980.0 200.8 975.8 203.0 985.0 200.0C994.2 197.0 989.2 196.7 997.5 196.0C1005.8 195.3 1001.7 195.8 1010.0 198.0C1018.3 200.2 1013.3 198.8 1022.5 202.5C1031.7 206.2 1027.5 205.7 1037.5 209.0C1047.5 212.3 1041.7 210.8 1052.5 212.5C1063.3 214.2 1057.5 213.2 1070.0 214.0C1082.5 214.8 1075.0 214.7 1090.0 215.0C1105.0 215.3 1098.3 215.0 1115.0 215.0C1131.7 215.0 1129.8 214.7 1140.0 215.0C1150.2 215.3 1143.7 215.7 1145.5 216.0" fill="none" stroke="#159a3c" stroke-width="2.9" stroke-linejoin="round" stroke-linecap="round"/>
<path d="M6.0 361.0C20.7 362.2 18.7 362.5 50.0 364.5C81.3 366.5 66.7 365.5 100.0 367.0C133.3 368.5 116.7 367.8 150.0 369.0C183.3 370.2 166.7 369.8 200.0 370.5C233.3 371.2 216.7 370.5 250.0 371.0C283.3 371.5 272.5 371.5 300.0 372.0C327.5 372.5 309.2 372.3 332.5 372.5C355.8 372.7 344.2 373.2 370.0 372.5C395.8 371.8 383.3 372.2 410.0 370.5C436.7 368.8 423.3 369.3 450.0 367.5C476.7 365.7 465.0 366.5 490.0 365.0C515.0 363.5 505.0 363.8 525.0 363.0C545.0 362.2 533.3 362.8 550.0 362.5C566.7 362.2 558.3 362.5 575.0 362.0C591.7 361.5 583.3 361.8 600.0 361.0C616.7 360.2 608.3 360.5 625.0 359.5C641.7 358.5 633.3 359.2 650.0 358.0C666.7 356.8 658.3 357.2 675.0 356.0C691.7 354.8 685.8 355.5 700.0 354.5C714.2 353.5 706.7 354.8 717.5 353.0C728.3 351.2 721.7 352.0 732.5 349.0C743.3 346.0 737.5 349.0 750.0 344.0C762.5 339.0 758.3 340.0 770.0 334.0C781.7 328.0 775.0 330.3 785.0 326.0C795.0 321.7 786.7 325.5 800.0 321.0C813.3 316.5 808.3 317.8 825.0 312.5C841.7 307.2 833.3 309.8 850.0 305.0C866.7 300.2 859.2 302.5 875.0 298.0C890.8 293.5 882.5 295.5 897.5 291.5C912.5 287.5 905.8 289.2 920.0 286.0C934.2 282.8 925.0 285.5 940.0 282.0C955.0 278.5 948.3 280.0 965.0 275.5C981.7 271.0 973.3 272.8 990.0 268.5C1006.7 264.2 998.3 266.7 1015.0 262.5C1031.7 258.3 1023.3 260.5 1040.0 256.0C1056.7 251.5 1048.3 253.5 1065.0 249.0C1081.7 244.5 1073.3 246.8 1090.0 242.5C1106.7 238.2 1100.0 239.3 1115.0 236.0C1130.0 232.7 1124.8 234.2 1135.0 232.5C1145.2 230.8 1142.0 231.5 1145.5 231.0" fill="none" stroke="#3464ea" stroke-width="2.9" stroke-linejoin="round" stroke-linecap="round"/>
<line x1="7.5" y1="370" x2="7.5" y2="373" stroke="#1f5ec4" stroke-width="1"/>
<rect x="6.0" y="372" width="3" height="1" fill="#1f5ec4"/>
<line x1="11.5" y1="372" x2="11.5" y2="376" stroke="#1f5ec4" stroke-width="1"/>
<rect x="10.0" y="372" width="3" height="3" fill="#1f5ec4"/>
<line x1="16.5" y1="374" x2="16.5" y2="375" stroke="#e0201a" stroke-width="1"/>
<rect x="15.0" y="374" width="3" height="1" fill="#e0201a"/>
<line x1="20.5" y1="374" x2="20.5" y2="378" stroke="#1f5ec4" stroke-width="1"/>
<rect x="19.0" y="375" width="3" height="2" fill="#1f5ec4"/>
<line x1="24.5" y1="376" x2="24.5" y2="380" stroke="#e0201a" stroke-width="1"/>
<rect x="23.0" y="377" width="3" height="1" fill="#e0201a"/>
<line x1="29.5" y1="374" x2="29.5" y2="379" stroke="#1f5ec4" stroke-width="1"/>
<rect x="28.0" y="377" width="3" height="1" fill="#1f5ec4"/>
<line x1="33.5" y1="373" x2="33.5" y2="380" stroke="#e0201a" stroke-width="1"/>
<rect x="32.0" y="374" width="3" height="4" fill="#e0201a"/>
<line x1="37.5" y1="372" x2="37.5" y2="376" stroke="#e0201a" stroke-width="1"/>
<rect x="36.0" y="374" width="3" height="1" fill="#e0201a"/>
<line x1="42.5" y1="373" x2="42.5" y2="376" stroke="#1f5ec4" stroke-width="1"/>
<rect x="41.0" y="373" width="3" height="2" fill="#1f5ec4"/>
<line x1="46.5" y1="374" x2="46.5" y2="378" stroke="#1f5ec4" stroke-width="1"/>
<rect x="45.0" y="375" width="3" height="1" fill="#1f5ec4"/>
<line x1="50.5" y1="372" x2="50.5" y2="378" stroke="#e0201a" stroke-width="1"/>
<rect x="49.0" y="375" width="3" height="1" fill="#e0201a"/>
<line x1="55.5" y1="373" x2="55.5" y2="378" stroke="#e0201a" stroke-width="1"/>
<rect x="54.0" y="374" width="3" height="1" fill="#e0201a"/>
<line x1="59.5" y1="371" x2="59.5" y2="377" stroke="#1f5ec4" stroke-width="1"/>
<rect x="58.0" y="374" width="3" height="3" fill="#1f5ec4"/>
<line x1="63.5" y1="375" x2="63.5" y2="378" stroke="#e0201a" stroke-width="1"/>
<rect x="62.0" y="376" width="3" height="1" fill="#e0201a"/>
<line x1="68.5" y1="373" x2="68.5" y2="378" stroke="#e0201a" stroke-width="1"/>
<rect x="67.0" y="375" width="3" height="1" fill="#e0201a"/>
<line x1="72.5" y1="373" x2="72.5" y2="382" stroke="#1f5ec4" stroke-width="1"/>
<rect x="71.0" y="375" width="3" height="6" fill="#1f5ec4"/>
<line x1="76.5" y1="378" x2="76.5" y2="384" stroke="#1f5ec4" stroke-width="1"/>
<rect x="75.0" y="381" width="3" height="1" fill="#1f5ec4"/>
<line x1="80.5" y1="381" x2="80.5" y2="384" stroke="#e0201a" stroke-width="1"/>
<rect x="79.0" y="381" width="3" height="1" fill="#e0201a"/>
<line x1="85.5" y1="379" x2="85.5" y2="383" stroke="#e0201a" stroke-width="1"/>
<rect x="84.0" y="382" width="3" height="1" fill="#e0201a"/>
<line x1="89.5" y1="380" x2="89.5" y2="383" stroke="#e0201a" stroke-width="1"/>
<rect x="88.0" y="380" width="3" height="2" fill="#e0201a"/>
<line x1="93.5" y1="379" x2="93.5" y2="382" stroke="#e0201a" stroke-width="1"/>
<rect x="92.0" y="379" width="3" height="1" fill="#e0201a"/>
<line x1="98.5" y1="378" x2="98.5" y2="382" stroke="#1f5ec4" stroke-width="1"/>
<rect x="97.0" y="379" width="3" height="1" fill="#1f5ec4"/>
<line x1="102.5" y1="377" x2="102.5" y2="382" stroke="#e0201a" stroke-width="1"/>
<rect x="101.0" y="379" width="3" height="1" fill="#e0201a"/>
<line x1="106.5" y1="379" x2="106.5" y2="383" stroke="#1f5ec4" stroke-width="1"/>
<rect x="105.0" y="379" width="3" height="3" fill="#1f5ec4"/>
<line x1="111.5" y1="377" x2="111.5" y2="383" stroke="#e0201a" stroke-width="1"/>
<rect x="110.0" y="380" width="3" height="3" fill="#e0201a"/>
<line x1="115.5" y1="378" x2="115.5" y2="381" stroke="#e0201a" stroke-width="1"/>
<rect x="114.0" y="379" width="3" height="1" fill="#e0201a"/>
<line x1="119.5" y1="378" x2="119.5" y2="382" stroke="#1f5ec4" stroke-width="1"/>
<rect x="118.0" y="378" width="3" height="2" fill="#1f5ec4"/>
<line x1="124.5" y1="377" x2="124.5" y2="382" stroke="#e0201a" stroke-width="1"/>
<rect x="123.0" y="379" width="3" height="1" fill="#e0201a"/>
<line x1="128.5" y1="378" x2="128.5" y2="381" stroke="#1f5ec4" stroke-width="1"/>
<rect x="127.0" y="379" width="3" height="1" fill="#1f5ec4"/>
<line x1="132.5" y1="378" x2="132.5" y2="384" stroke="#1f5ec4" stroke-width="1"/>
<rect x="131.0" y="380" width="3" height="1" fill="#1f5ec4"/>
<line x1="136.5" y1="379" x2="136.5" y2="383" stroke="#e0201a" stroke-width="1"/>
<rect x="135.0" y="379" width="3" height="2" fill="#e0201a"/>
<line x1="141.5" y1="377" x2="141.5" y2="379" stroke="#e0201a" stroke-width="1"/>
<rect x="140.0" y="377" width="3" height="1" fill="#e0201a"/>
<line x1="145.5" y1="377" x2="145.5" y2="379" stroke="#1f5ec4" stroke-width="1"/>
<rect x="144.0" y="377" width="3" height="1" fill="#1f5ec4"/>
<line x1="149.5" y1="376" x2="149.5" y2="380" stroke="#e0201a" stroke-width="1"/>
<rect x="148.0" y="376" width="3" height="2" fill="#e0201a"/>
<line x1="154.5" y1="375" x2="154.5" y2="378" stroke="#1f5ec4" stroke-width="1"/>
<rect x="153.0" y="375" width="3" height="2" fill="#1f5ec4"/>
<line x1="158.5" y1="372" x2="158.5" y2="379" stroke="#e0201a" stroke-width="1"/>
<rect x="157.0" y="375" width="3" height="2" fill="#e0201a"/>
<line x1="162.5" y1="374" x2="162.5" y2="376" stroke="#e0201a" stroke-width="1"/>
<rect x="161.0" y="374" width="3" height="1" fill="#e0201a"/>
<line x1="167.5" y1="370" x2="167.5" y2="374" stroke="#e0201a" stroke-width="1"/>
<rect x="166.0" y="373" width="3" height="1" fill="#e0201a"/>
<line x1="171.5" y1="369" x2="171.5" y2="374" stroke="#e0201a" stroke-width="1"/>
<rect x="170.0" y="370" width="3" height="3" fill="#e0201a"/>
<line x1="175.5" y1="368" x2="175.5" y2="375" stroke="#1f5ec4" stroke-width="1"/>
<rect x="174.0" y="370" width="3" height="2" fill="#1f5ec4"/>
<line x1="180.5" y1="372" x2="180.5" y2="375" stroke="#1f5ec4" stroke-width="1"/>
<rect x="179.0" y="373" width="3" height="1" fill="#1f5ec4"/>
<line x1="184.5" y1="368" x2="184.5" y2="376" stroke="#e0201a" stroke-width="1"/>
<rect x="183.0" y="370" width="3" height="4" fill="#e0201a"/>
<line x1="188.5" y1="367" x2="188.5" y2="373" stroke="#1f5ec4" stroke-width="1"/>
<rect x="187.0" y="370" width="3" height="1" fill="#1f5ec4"/>
<line x1="192.5" y1="369" x2="192.5" y2="375" stroke="#1f5ec4" stroke-width="1"/>
<rect x="191.0" y="371" width="3" height="1" fill="#1f5ec4"/>
<line x1="197.5" y1="368" x2="197.5" y2="373" stroke="#e0201a" stroke-width="1"/>
<rect x="196.0" y="369" width="3" height="3" fill="#e0201a"/>
<line x1="201.5" y1="367" x2="201.5" y2="371" stroke="#e0201a" stroke-width="1"/>
<rect x="200.0" y="368" width="3" height="1" fill="#e0201a"/>
<line x1="205.5" y1="365" x2="205.5" y2="373" stroke="#1f5ec4" stroke-width="1"/>
<rect x="204.0" y="368" width="3" height="3" fill="#1f5ec4"/>
<line x1="210.5" y1="365" x2="210.5" y2="371" stroke="#e0201a" stroke-width="1"/>
<rect x="209.0" y="366" width="3" height="4" fill="#e0201a"/>
<line x1="214.5" y1="356" x2="214.5" y2="370" stroke="#e0201a" stroke-width="1"/>
<rect x="213.0" y="362" width="3" height="8" fill="#e0201a"/>
<line x1="218.5" y1="360" x2="218.5" y2="365" stroke="#e0201a" stroke-width="1"/>
<rect x="217.0" y="362" width="3" height="1" fill="#e0201a"/>
<line x1="223.5" y1="362" x2="223.5" y2="365" stroke="#e0201a" stroke-width="1"/>
<rect x="222.0" y="362" width="3" height="1" fill="#e0201a"/>
<line x1="227.5" y1="360" x2="227.5" y2="365" stroke="#1f5ec4" stroke-width="1"/>
<rect x="226.0" y="362" width="3" height="1" fill="#1f5ec4"/>
<line x1="231.5" y1="360" x2="231.5" y2="366" stroke="#e0201a" stroke-width="1"/>
<rect x="230.0" y="361" width="3" height="2" fill="#e0201a"/>
<line x1="236.5" y1="359" x2="236.5" y2="368" stroke="#1f5ec4" stroke-width="1"/>
<rect x="235.0" y="361" width="3" height="4" fill="#1f5ec4"/>
<line x1="240.5" y1="364" x2="240.5" y2="366" stroke="#1f5ec4" stroke-width="1"/>
<rect x="239.0" y="365" width="3" height="1" fill="#1f5ec4"/>
<line x1="244.5" y1="365" x2="244.5" y2="370" stroke="#1f5ec4" stroke-width="1"/>
<rect x="243.0" y="366" width="3" height="1" fill="#1f5ec4"/>
<line x1="249.5" y1="366" x2="249.5" y2="370" stroke="#1f5ec4" stroke-width="1"/>
<rect x="248.0" y="367" width="3" height="1" fill="#1f5ec4"/>
<line x1="253.5" y1="363" x2="253.5" y2="369" stroke="#e0201a" stroke-width="1"/>
<rect x="252.0" y="365" width="3" height="3" fill="#e0201a"/>
<line x1="257.5" y1="365" x2="257.5" y2="370" stroke="#1f5ec4" stroke-width="1"/>
<rect x="256.0" y="366" width="3" height="2" fill="#1f5ec4"/>
<line x1="261.5" y1="367" x2="261.5" y2="371" stroke="#1f5ec4" stroke-width="1"/>
<rect x="260.0" y="367" width="3" height="3" fill="#1f5ec4"/>
<line x1="266.5" y1="367" x2="266.5" y2="371" stroke="#e0201a" stroke-width="1"/>
<rect x="265.0" y="368" width="3" height="2" fill="#e0201a"/>
<line x1="270.5" y1="367" x2="270.5" y2="370" stroke="#e0201a" stroke-width="1"/>
<rect x="269.0" y="368" width="3" height="1" fill="#e0201a"/>
<line x1="274.5" y1="367" x2="274.5" y2="373" stroke="#1f5ec4" stroke-width="1"/>
<rect x="273.0" y="368" width="3" height="2" fill="#1f5ec4"/>
<line x1="279.5" y1="368" x2="279.5" y2="371" stroke="#e0201a" stroke-width="1"/>
<rect x="278.0" y="370" width="3" height="1" fill="#e0201a"/>
<line x1="283.5" y1="369" x2="283.5" y2="373" stroke="#1f5ec4" stroke-width="1"/>
<rect x="282.0" y="369" width="3" height="1" fill="#1f5ec4"/>
<line x1="287.5" y1="367" x2="287.5" y2="372" stroke="#e0201a" stroke-width="1"/>
<rect x="286.0" y="369" width="3" height="1" fill="#e0201a"/>
<line x1="292.5" y1="368" x2="292.5" y2="372" stroke="#1f5ec4" stroke-width="1"/>
<rect x="291.0" y="369" width="3" height="1" fill="#1f5ec4"/>
<line x1="296.5" y1="369" x2="296.5" y2="372" stroke="#e0201a" stroke-width="1"/>
<rect x="295.0" y="370" width="3" height="1" fill="#e0201a"/>
<line x1="300.5" y1="368" x2="300.5" y2="376" stroke="#1f5ec4" stroke-width="1"/>
<rect x="299.0" y="370" width="3" height="4" fill="#1f5ec4"/>
<line x1="305.5" y1="372" x2="305.5" y2="378" stroke="#1f5ec4" stroke-width="1"/>
<rect x="304.0" y="374" width="3" height="2" fill="#1f5ec4"/>
<line x1="309.5" y1="375" x2="309.5" y2="378" stroke="#e0201a" stroke-width="1"/>
<rect x="308.0" y="376" width="3" height="1" fill="#e0201a"/>
<line x1="313.5" y1="375" x2="313.5" y2="380" stroke="#1f5ec4" stroke-width="1"/>
<rect x="312.0" y="377" width="3" height="1" fill="#1f5ec4"/>
<line x1="317.5" y1="375" x2="317.5" y2="383" stroke="#1f5ec4" stroke-width="1"/>
<rect x="316.0" y="377" width="3" height="3" fill="#1f5ec4"/>
<line x1="322.5" y1="379" x2="322.5" y2="382" stroke="#1f5ec4" stroke-width="1"/>
<rect x="321.0" y="380" width="3" height="1" fill="#1f5ec4"/>
<line x1="326.5" y1="379" x2="326.5" y2="383" stroke="#e0201a" stroke-width="1"/>
<rect x="325.0" y="379" width="3" height="2" fill="#e0201a"/>
<line x1="330.5" y1="379" x2="330.5" y2="384" stroke="#1f5ec4" stroke-width="1"/>
<rect x="329.0" y="379" width="3" height="3" fill="#1f5ec4"/>
<line x1="335.5" y1="379" x2="335.5" y2="385" stroke="#1f5ec4" stroke-width="1"/>
<rect x="334.0" y="382" width="3" height="1" fill="#1f5ec4"/>
<line x1="339.5" y1="379" x2="339.5" y2="384" stroke="#e0201a" stroke-width="1"/>
<rect x="338.0" y="380" width="3" height="2" fill="#e0201a"/>
<line x1="343.5" y1="380" x2="343.5" y2="384" stroke="#1f5ec4" stroke-width="1"/>
<rect x="342.0" y="380" width="3" height="3" fill="#1f5ec4"/>
<line x1="348.5" y1="379" x2="348.5" y2="384" stroke="#e0201a" stroke-width="1"/>
<rect x="347.0" y="379" width="3" height="4" fill="#e0201a"/>
<line x1="352.5" y1="376" x2="352.5" y2="380" stroke="#e0201a" stroke-width="1"/>
<rect x="351.0" y="378" width="3" height="1" fill="#e0201a"/>
<line x1="356.5" y1="367" x2="356.5" y2="379" stroke="#e0201a" stroke-width="1"/>
<rect x="355.0" y="369" width="3" height="9" fill="#e0201a"/>
<line x1="361.5" y1="356" x2="361.5" y2="378" stroke="#e0201a" stroke-width="1"/>
<rect x="360.0" y="356" width="3" height="22" fill="#e0201a"/>
<line x1="365.5" y1="356" x2="365.5" y2="363" stroke="#1f5ec4" stroke-width="1"/>
<rect x="364.0" y="357" width="3" height="5" fill="#1f5ec4"/>
<line x1="369.5" y1="352" x2="369.5" y2="363" stroke="#e0201a" stroke-width="1"/>
<rect x="368.0" y="353" width="3" height="9" fill="#e0201a"/>
<line x1="374.5" y1="340" x2="374.5" y2="359" stroke="#e0201a" stroke-width="1"/>
<rect x="373.0" y="346" width="3" height="12" fill="#e0201a"/>
<line x1="378.5" y1="345" x2="378.5" y2="355" stroke="#1f5ec4" stroke-width="1"/>
<rect x="377.0" y="346" width="3" height="6" fill="#1f5ec4"/>
<line x1="382.5" y1="349" x2="382.5" y2="352" stroke="#e0201a" stroke-width="1"/>
<rect x="381.0" y="349" width="3" height="3" fill="#e0201a"/>
<line x1="386.5" y1="348" x2="386.5" y2="353" stroke="#e0201a" stroke-width="1"/>
<rect x="385.0" y="349" width="3" height="1" fill="#e0201a"/>
<line x1="391.5" y1="349" x2="391.5" y2="353" stroke="#e0201a" stroke-width="1"/>
<rect x="390.0" y="349" width="3" height="1" fill="#e0201a"/>
<line x1="395.5" y1="345" x2="395.5" y2="351" stroke="#e0201a" stroke-width="1"/>
<rect x="394.0" y="347" width="3" height="3" fill="#e0201a"/>
<line x1="399.5" y1="347" x2="399.5" y2="352" stroke="#1f5ec4" stroke-width="1"/>
<rect x="398.0" y="348" width="3" height="3" fill="#1f5ec4"/>
<line x1="404.5" y1="350" x2="404.5" y2="353" stroke="#1f5ec4" stroke-width="1"/>
<rect x="403.0" y="351" width="3" height="1" fill="#1f5ec4"/>
<line x1="408.5" y1="345" x2="408.5" y2="353" stroke="#e0201a" stroke-width="1"/>
<rect x="407.0" y="346" width="3" height="6" fill="#e0201a"/>
<line x1="412.5" y1="344" x2="412.5" y2="348" stroke="#e0201a" stroke-width="1"/>
<rect x="411.0" y="346" width="3" height="1" fill="#e0201a"/>
<line x1="417.5" y1="324" x2="417.5" y2="348" stroke="#e0201a" stroke-width="1"/>
<rect x="416.0" y="324" width="3" height="24" fill="#e0201a"/>
<line x1="421.5" y1="321" x2="421.5" y2="334" stroke="#1f5ec4" stroke-width="1"/>
<rect x="420.0" y="324" width="3" height="8" fill="#1f5ec4"/>
<line x1="425.5" y1="324" x2="425.5" y2="333" stroke="#e0201a" stroke-width="1"/>
<rect x="424.0" y="328" width="3" height="4" fill="#e0201a"/>
<line x1="430.5" y1="326" x2="430.5" y2="331" stroke="#1f5ec4" stroke-width="1"/>
<rect x="429.0" y="327" width="3" height="1" fill="#1f5ec4"/>
<line x1="434.5" y1="326" x2="434.5" y2="333" stroke="#1f5ec4" stroke-width="1"/>
<rect x="433.0" y="328" width="3" height="1" fill="#1f5ec4"/>
<line x1="438.5" y1="315" x2="438.5" y2="342" stroke="#1f5ec4" stroke-width="1"/>
<rect x="437.0" y="331" width="3" height="4" fill="#1f5ec4"/>
<line x1="442.5" y1="333" x2="442.5" y2="337" stroke="#e0201a" stroke-width="1"/>
<rect x="441.0" y="334" width="3" height="1" fill="#e0201a"/>
<line x1="447.5" y1="339" x2="447.5" y2="351" stroke="#1f5ec4" stroke-width="1"/>
<rect x="446.0" y="340" width="3" height="3" fill="#1f5ec4"/>
<line x1="451.5" y1="330" x2="451.5" y2="344" stroke="#e0201a" stroke-width="1"/>
<rect x="450.0" y="331" width="3" height="12" fill="#e0201a"/>
<line x1="455.5" y1="327" x2="455.5" y2="334" stroke="#e0201a" stroke-width="1"/>
<rect x="454.0" y="330" width="3" height="1" fill="#e0201a"/>
<line x1="460.5" y1="329" x2="460.5" y2="333" stroke="#1f5ec4" stroke-width="1"/>
<rect x="459.0" y="330" width="3" height="2" fill="#1f5ec4"/>
<line x1="464.5" y1="331" x2="464.5" y2="336" stroke="#1f5ec4" stroke-width="1"/>
<rect x="463.0" y="332" width="3" height="1" fill="#1f5ec4"/>
<line x1="468.5" y1="331" x2="468.5" y2="341" stroke="#1f5ec4" stroke-width="1"/>
<rect x="467.0" y="332" width="3" height="5" fill="#1f5ec4"/>
<line x1="473.5" y1="336" x2="473.5" y2="338" stroke="#e0201a" stroke-width="1"/>
<rect x="472.0" y="336" width="3" height="1" fill="#e0201a"/>
<line x1="477.5" y1="335" x2="477.5" y2="341" stroke="#1f5ec4" stroke-width="1"/>
<rect x="476.0" y="336" width="3" height="3" fill="#1f5ec4"/>
<line x1="481.5" y1="336" x2="481.5" y2="340" stroke="#e0201a" stroke-width="1"/>
<rect x="480.0" y="336" width="3" height="2" fill="#e0201a"/>
<line x1="486.5" y1="334" x2="486.5" y2="337" stroke="#1f5ec4" stroke-width="1"/>
<rect x="485.0" y="335" width="3" height="1" fill="#1f5ec4"/>
<line x1="490.5" y1="334" x2="490.5" y2="342" stroke="#1f5ec4" stroke-width="1"/>
<rect x="489.0" y="336" width="3" height="4" fill="#1f5ec4"/>
<line x1="494.5" y1="339" x2="494.5" y2="343" stroke="#1f5ec4" stroke-width="1"/>
<rect x="493.0" y="340" width="3" height="2" fill="#1f5ec4"/>
<line x1="499.5" y1="339" x2="499.5" y2="348" stroke="#1f5ec4" stroke-width="1"/>
<rect x="498.0" y="342" width="3" height="3" fill="#1f5ec4"/>
<line x1="503.5" y1="338" x2="503.5" y2="348" stroke="#e0201a" stroke-width="1"/>
<rect x="502.0" y="342" width="3" height="4" fill="#e0201a"/>
<line x1="507.5" y1="342" x2="507.5" y2="349" stroke="#1f5ec4" stroke-width="1"/>
<rect x="506.0" y="342" width="3" height="5" fill="#1f5ec4"/>
<line x1="511.5" y1="344" x2="511.5" y2="351" stroke="#e0201a" stroke-width="1"/>
<rect x="510.0" y="347" width="3" height="1" fill="#e0201a"/>
<line x1="516.5" y1="345" x2="516.5" y2="351" stroke="#1f5ec4" stroke-width="1"/>
<rect x="515.0" y="347" width="3" height="1" fill="#1f5ec4"/>
<line x1="520.5" y1="347" x2="520.5" y2="350" stroke="#e0201a" stroke-width="1"/>
<rect x="519.0" y="348" width="3" height="1" fill="#e0201a"/>
<line x1="524.5" y1="345" x2="524.5" y2="351" stroke="#e0201a" stroke-width="1"/>
<rect x="523.0" y="347" width="3" height="1" fill="#e0201a"/>
<line x1="529.5" y1="346" x2="529.5" y2="351" stroke="#1f5ec4" stroke-width="1"/>
<rect x="528.0" y="348" width="3" height="3" fill="#1f5ec4"/>
<line x1="533.5" y1="349" x2="533.5" y2="354" stroke="#1f5ec4" stroke-width="1"/>
<rect x="532.0" y="351" width="3" height="1" fill="#1f5ec4"/>
<line x1="537.5" y1="349" x2="537.5" y2="354" stroke="#1f5ec4" stroke-width="1"/>
<rect x="536.0" y="352" width="3" height="1" fill="#1f5ec4"/>
<line x1="542.5" y1="348" x2="542.5" y2="353" stroke="#e0201a" stroke-width="1"/>
<rect x="541.0" y="351" width="3" height="1" fill="#e0201a"/>
<line x1="546.5" y1="349" x2="546.5" y2="357" stroke="#1f5ec4" stroke-width="1"/>
<rect x="545.0" y="351" width="3" height="4" fill="#1f5ec4"/>
<line x1="550.5" y1="352" x2="550.5" y2="358" stroke="#e0201a" stroke-width="1"/>
<rect x="549.0" y="355" width="3" height="1" fill="#e0201a"/>
<line x1="555.5" y1="354" x2="555.5" y2="357" stroke="#1f5ec4" stroke-width="1"/>
<rect x="554.0" y="354" width="3" height="2" fill="#1f5ec4"/>
<line x1="559.5" y1="354" x2="559.5" y2="357" stroke="#1f5ec4" stroke-width="1"/>
<rect x="558.0" y="356" width="3" height="1" fill="#1f5ec4"/>
<line x1="563.5" y1="351" x2="563.5" y2="359" stroke="#e0201a" stroke-width="1"/>
<rect x="562.0" y="353" width="3" height="4" fill="#e0201a"/>
<line x1="567.5" y1="351" x2="567.5" y2="360" stroke="#1f5ec4" stroke-width="1"/>
<rect x="566.0" y="353" width="3" height="5" fill="#1f5ec4"/>
<line x1="572.5" y1="354" x2="572.5" y2="359" stroke="#1f5ec4" stroke-width="1"/>
<rect x="571.0" y="358" width="3" height="1" fill="#1f5ec4"/>
<line x1="576.5" y1="354" x2="576.5" y2="370" stroke="#1f5ec4" stroke-width="1"/>
<rect x="575.0" y="355" width="3" height="14" fill="#1f5ec4"/>
<line x1="580.5" y1="355" x2="580.5" y2="371" stroke="#e0201a" stroke-width="1"/>
<rect x="579.0" y="356" width="3" height="14" fill="#e0201a"/>
<line x1="585.5" y1="356" x2="585.5" y2="367" stroke="#1f5ec4" stroke-width="1"/>
<rect x="584.0" y="357" width="3" height="8" fill="#1f5ec4"/>
<line x1="589.5" y1="362" x2="589.5" y2="368" stroke="#e0201a" stroke-width="1"/>
<rect x="588.0" y="363" width="3" height="2" fill="#e0201a"/>
<line x1="593.5" y1="361" x2="593.5" y2="365" stroke="#e0201a" stroke-width="1"/>
<rect x="592.0" y="362" width="3" height="1" fill="#e0201a"/>
<line x1="598.5" y1="358" x2="598.5" y2="367" stroke="#1f5ec4" stroke-width="1"/>
<rect x="597.0" y="361" width="3" height="4" fill="#1f5ec4"/>
<line x1="602.5" y1="360" x2="602.5" y2="369" stroke="#e0201a" stroke-width="1"/>
<rect x="601.0" y="360" width="3" height="6" fill="#e0201a"/>
<line x1="606.5" y1="353" x2="606.5" y2="365" stroke="#e0201a" stroke-width="1"/>
<rect x="605.0" y="353" width="3" height="11" fill="#e0201a"/>
<line x1="611.5" y1="349" x2="611.5" y2="354" stroke="#e0201a" stroke-width="1"/>
<rect x="610.0" y="351" width="3" height="2" fill="#e0201a"/>
<line x1="615.5" y1="349" x2="615.5" y2="354" stroke="#e0201a" stroke-width="1"/>
<rect x="614.0" y="350" width="3" height="1" fill="#e0201a"/>
<line x1="619.5" y1="344" x2="619.5" y2="351" stroke="#e0201a" stroke-width="1"/>
<rect x="618.0" y="347" width="3" height="3" fill="#e0201a"/>
<line x1="623.5" y1="344" x2="623.5" y2="353" stroke="#1f5ec4" stroke-width="1"/>
<rect x="622.0" y="348" width="3" height="4" fill="#1f5ec4"/>
<line x1="628.5" y1="345" x2="628.5" y2="354" stroke="#e0201a" stroke-width="1"/>
<rect x="627.0" y="349" width="3" height="3" fill="#e0201a"/>
<line x1="632.5" y1="347" x2="632.5" y2="349" stroke="#e0201a" stroke-width="1"/>
<rect x="631.0" y="348" width="3" height="1" fill="#e0201a"/>
<line x1="636.5" y1="345" x2="636.5" y2="352" stroke="#e0201a" stroke-width="1"/>
<rect x="635.0" y="346" width="3" height="3" fill="#e0201a"/>
<line x1="641.5" y1="343" x2="641.5" y2="347" stroke="#1f5ec4" stroke-width="1"/>
<rect x="640.0" y="345" width="3" height="1" fill="#1f5ec4"/>
<line x1="645.5" y1="342" x2="645.5" y2="349" stroke="#e0201a" stroke-width="1"/>
<rect x="644.0" y="345" width="3" height="1" fill="#e0201a"/>
<line x1="649.5" y1="335" x2="649.5" y2="346" stroke="#e0201a" stroke-width="1"/>
<rect x="648.0" y="344" width="3" height="2" fill="#e0201a"/>
<line x1="654.5" y1="336" x2="654.5" y2="348" stroke="#1f5ec4" stroke-width="1"/>
<rect x="653.0" y="343" width="3" height="4" fill="#1f5ec4"/>
<line x1="658.5" y1="341" x2="658.5" y2="358" stroke="#1f5ec4" stroke-width="1"/>
<rect x="657.0" y="342" width="3" height="16" fill="#1f5ec4"/>
<line x1="662.5" y1="345" x2="662.5" y2="358" stroke="#e0201a" stroke-width="1"/>
<rect x="661.0" y="346" width="3" height="9" fill="#e0201a"/>
<line x1="667.5" y1="341" x2="667.5" y2="346" stroke="#e0201a" stroke-width="1"/>
<rect x="666.0" y="342" width="3" height="4" fill="#e0201a"/>
<line x1="671.5" y1="339" x2="671.5" y2="343" stroke="#e0201a" stroke-width="1"/>
<rect x="670.0" y="341" width="3" height="1" fill="#e0201a"/>
<line x1="675.5" y1="332" x2="675.5" y2="342" stroke="#e0201a" stroke-width="1"/>
<rect x="674.0" y="336" width="3" height="5" fill="#e0201a"/>
<line x1="680.5" y1="333" x2="680.5" y2="338" stroke="#1f5ec4" stroke-width="1"/>
<rect x="679.0" y="335" width="3" height="1" fill="#1f5ec4"/>
<line x1="684.5" y1="332" x2="684.5" y2="339" stroke="#e0201a" stroke-width="1"/>
<rect x="683.0" y="333" width="3" height="2" fill="#e0201a"/>
<line x1="688.5" y1="329" x2="688.5" y2="339" stroke="#1f5ec4" stroke-width="1"/>
<rect x="687.0" y="333" width="3" height="2" fill="#1f5ec4"/>
<line x1="692.5" y1="334" x2="692.5" y2="336" stroke="#1f5ec4" stroke-width="1"/>
<rect x="691.0" y="334" width="3" height="1" fill="#1f5ec4"/>
<line x1="697.5" y1="334" x2="697.5" y2="337" stroke="#1f5ec4" stroke-width="1"/>
<rect x="696.0" y="335" width="3" height="1" fill="#1f5ec4"/>
<line x1="701.5" y1="334" x2="701.5" y2="339" stroke="#1f5ec4" stroke-width="1"/>
<rect x="700.0" y="337" width="3" height="1" fill="#1f5ec4"/>
<line x1="705.5" y1="335" x2="705.5" y2="339" stroke="#e0201a" stroke-width="1"/>
<rect x="704.0" y="336" width="3" height="2" fill="#e0201a"/>
<line x1="710.5" y1="326" x2="710.5" y2="336" stroke="#e0201a" stroke-width="1"/>
<rect x="709.0" y="330" width="3" height="6" fill="#e0201a"/>
<line x1="714.5" y1="312" x2="714.5" y2="331" stroke="#e0201a" stroke-width="1"/>
<rect x="713.0" y="315" width="3" height="15" fill="#e0201a"/>
<line x1="718.5" y1="264" x2="718.5" y2="330" stroke="#e0201a" stroke-width="1"/>
<rect x="717.0" y="264" width="3" height="66" fill="#e0201a"/>
<line x1="722.5" y1="182" x2="722.5" y2="262" stroke="#1f5ec4" stroke-width="1"/>
<rect x="721.0" y="249" width="3" height="10" fill="#1f5ec4"/>
<line x1="726.5" y1="220" x2="726.5" y2="275" stroke="#e0201a" stroke-width="1"/>
<rect x="725.0" y="226" width="3" height="35" fill="#e0201a"/>
<line x1="731.5" y1="226" x2="731.5" y2="272" stroke="#1f5ec4" stroke-width="1"/>
<rect x="730.0" y="226" width="3" height="43" fill="#1f5ec4"/>
<line x1="735.5" y1="240" x2="735.5" y2="272" stroke="#e0201a" stroke-width="1"/>
<rect x="734.0" y="246" width="3" height="26" fill="#e0201a"/>
<line x1="739.5" y1="224" x2="739.5" y2="240" stroke="#e0201a" stroke-width="1"/>
<rect x="738.0" y="224" width="3" height="12" fill="#e0201a"/>
<line x1="744.5" y1="190" x2="744.5" y2="225" stroke="#e0201a" stroke-width="1"/>
<rect x="743.0" y="210" width="3" height="15" fill="#e0201a"/>
<line x1="748.5" y1="154" x2="748.5" y2="222" stroke="#e0201a" stroke-width="1"/>
<rect x="747.0" y="165" width="3" height="51" fill="#e0201a"/>
<line x1="752.5" y1="130" x2="752.5" y2="170" stroke="#1f5ec4" stroke-width="1"/>
<rect x="751.0" y="162" width="3" height="4" fill="#1f5ec4"/>
<line x1="757.5" y1="130" x2="757.5" y2="160" stroke="#e0201a" stroke-width="1"/>
<rect x="756.0" y="153" width="3" height="2" fill="#e0201a"/>
<line x1="761.5" y1="98" x2="761.5" y2="152" stroke="#e0201a" stroke-width="1"/>
<rect x="760.0" y="135" width="3" height="13" fill="#e0201a"/>
<line x1="765.5" y1="122" x2="765.5" y2="154" stroke="#1f5ec4" stroke-width="1"/>
<rect x="764.0" y="126" width="3" height="10" fill="#1f5ec4"/>
<line x1="770.5" y1="69" x2="770.5" y2="118" stroke="#e0201a" stroke-width="1"/>
<rect x="769.0" y="77" width="3" height="33" fill="#e0201a"/>
<line x1="774.5" y1="74" x2="774.5" y2="108" stroke="#1f5ec4" stroke-width="1"/>
<rect x="773.0" y="88" width="3" height="2" fill="#1f5ec4"/>
<line x1="779.5" y1="74" x2="779.5" y2="105" stroke="#e0201a" stroke-width="1"/>
<rect x="778.0" y="78" width="3" height="27" fill="#e0201a"/>
<line x1="783.5" y1="75" x2="783.5" y2="114" stroke="#1f5ec4" stroke-width="1"/>
<rect x="782.0" y="79" width="3" height="30" fill="#1f5ec4"/>
<line x1="787.5" y1="109" x2="787.5" y2="142" stroke="#1f5ec4" stroke-width="1"/>
<rect x="786.0" y="111" width="3" height="18" fill="#1f5ec4"/>
<line x1="791.5" y1="122" x2="791.5" y2="159" stroke="#1f5ec4" stroke-width="1"/>
<rect x="790.0" y="129" width="3" height="26" fill="#1f5ec4"/>
<line x1="796.5" y1="142" x2="796.5" y2="166" stroke="#1f5ec4" stroke-width="1"/>
<rect x="795.0" y="152" width="3" height="13" fill="#1f5ec4"/>
<line x1="800.5" y1="160" x2="800.5" y2="170" stroke="#e0201a" stroke-width="1"/>
<rect x="799.0" y="164" width="3" height="2" fill="#e0201a"/>
<line x1="804.5" y1="149" x2="804.5" y2="209" stroke="#1f5ec4" stroke-width="1"/>
<rect x="803.0" y="152" width="3" height="56" fill="#1f5ec4"/>
<line x1="809.5" y1="205" x2="809.5" y2="225" stroke="#1f5ec4" stroke-width="1"/>
<rect x="808.0" y="208" width="3" height="10" fill="#1f5ec4"/>
<line x1="813.5" y1="198" x2="813.5" y2="220" stroke="#1f5ec4" stroke-width="1"/>
<rect x="812.0" y="210" width="3" height="6" fill="#1f5ec4"/>
<line x1="817.5" y1="185" x2="817.5" y2="216" stroke="#e0201a" stroke-width="1"/>
<rect x="816.0" y="198" width="3" height="18" fill="#e0201a"/>
<line x1="822.5" y1="188" x2="822.5" y2="209" stroke="#e0201a" stroke-width="1"/>
<rect x="821.0" y="195" width="3" height="5" fill="#e0201a"/>
<line x1="826.5" y1="192" x2="826.5" y2="211" stroke="#1f5ec4" stroke-width="1"/>
<rect x="825.0" y="192" width="3" height="19" fill="#1f5ec4"/>
<line x1="830.5" y1="211" x2="830.5" y2="230" stroke="#1f5ec4" stroke-width="1"/>
<rect x="829.0" y="212" width="3" height="13" fill="#1f5ec4"/>
<line x1="835.5" y1="201" x2="835.5" y2="224" stroke="#e0201a" stroke-width="1"/>
<rect x="834.0" y="201" width="3" height="23" fill="#e0201a"/>
<line x1="839.5" y1="204" x2="839.5" y2="235" stroke="#1f5ec4" stroke-width="1"/>
<rect x="838.0" y="204" width="3" height="26" fill="#1f5ec4"/>
<line x1="843.5" y1="226" x2="843.5" y2="241" stroke="#1f5ec4" stroke-width="1"/>
<rect x="842.0" y="228" width="3" height="8" fill="#1f5ec4"/>
<line x1="848.5" y1="230" x2="848.5" y2="244" stroke="#1f5ec4" stroke-width="1"/>
<rect x="847.0" y="230" width="3" height="12" fill="#1f5ec4"/>
<line x1="852.5" y1="241" x2="852.5" y2="254" stroke="#1f5ec4" stroke-width="1"/>
<rect x="851.0" y="242" width="3" height="10" fill="#1f5ec4"/>
<line x1="856.5" y1="232" x2="856.5" y2="254" stroke="#e0201a" stroke-width="1"/>
<rect x="855.0" y="232" width="3" height="16" fill="#e0201a"/>
<line x1="861.5" y1="235" x2="861.5" y2="245" stroke="#e0201a" stroke-width="1"/>
<rect x="860.0" y="239" width="3" height="2" fill="#e0201a"/>
<line x1="865.5" y1="238" x2="865.5" y2="248" stroke="#1f5ec4" stroke-width="1"/>
<rect x="864.0" y="239" width="3" height="9" fill="#1f5ec4"/>
<line x1="869.5" y1="242" x2="869.5" y2="250" stroke="#e0201a" stroke-width="1"/>
<rect x="868.0" y="245" width="3" height="2" fill="#e0201a"/>
<line x1="874.5" y1="238" x2="874.5" y2="250" stroke="#1f5ec4" stroke-width="1"/>
<rect x="873.0" y="243" width="3" height="2" fill="#1f5ec4"/>
<line x1="878.5" y1="246" x2="878.5" y2="268" stroke="#1f5ec4" stroke-width="1"/>
<rect x="877.0" y="252" width="3" height="12" fill="#1f5ec4"/>
<line x1="882.5" y1="260" x2="882.5" y2="267" stroke="#e0201a" stroke-width="1"/>
<rect x="881.0" y="261" width="3" height="5" fill="#e0201a"/>
<line x1="886.5" y1="210" x2="886.5" y2="242" stroke="#e0201a" stroke-width="1"/>
<rect x="885.0" y="222" width="3" height="16" fill="#e0201a"/>
<line x1="891.5" y1="218" x2="891.5" y2="241" stroke="#1f5ec4" stroke-width="1"/>
<rect x="890.0" y="219" width="3" height="17" fill="#1f5ec4"/>
<line x1="895.5" y1="215" x2="895.5" y2="240" stroke="#e0201a" stroke-width="1"/>
<rect x="894.0" y="220" width="3" height="19" fill="#e0201a"/>
<line x1="899.5" y1="220" x2="899.5" y2="232" stroke="#1f5ec4" stroke-width="1"/>
<rect x="898.0" y="224" width="3" height="7" fill="#1f5ec4"/>
<line x1="904.5" y1="232" x2="904.5" y2="248" stroke="#1f5ec4" stroke-width="1"/>
<rect x="903.0" y="236" width="3" height="8" fill="#1f5ec4"/>
<line x1="908.5" y1="248" x2="908.5" y2="280" stroke="#1f5ec4" stroke-width="1"/>
<rect x="907.0" y="250" width="3" height="20" fill="#1f5ec4"/>
<line x1="912.5" y1="242" x2="912.5" y2="262" stroke="#e0201a" stroke-width="1"/>
<rect x="911.0" y="250" width="3" height="10" fill="#e0201a"/>
<line x1="917.5" y1="221" x2="917.5" y2="240" stroke="#1f5ec4" stroke-width="1"/>
<rect x="916.0" y="235" width="3" height="3" fill="#1f5ec4"/>
<line x1="921.5" y1="234" x2="921.5" y2="246" stroke="#1f5ec4" stroke-width="1"/>
<rect x="920.0" y="242" width="3" height="3" fill="#1f5ec4"/>
<line x1="925.5" y1="232" x2="925.5" y2="245" stroke="#1f5ec4" stroke-width="1"/>
<rect x="924.0" y="239" width="3" height="5" fill="#1f5ec4"/>
<line x1="930.5" y1="196" x2="930.5" y2="235" stroke="#e0201a" stroke-width="1"/>
<rect x="929.0" y="208" width="3" height="27" fill="#e0201a"/>
<line x1="934.5" y1="194" x2="934.5" y2="209" stroke="#e0201a" stroke-width="1"/>
<rect x="933.0" y="201" width="3" height="2" fill="#e0201a"/>
<line x1="938.5" y1="189" x2="938.5" y2="208" stroke="#e0201a" stroke-width="1"/>
<rect x="937.0" y="198" width="3" height="1" fill="#e0201a"/>
<line x1="943.5" y1="171" x2="943.5" y2="198" stroke="#e0201a" stroke-width="1"/>
<rect x="942.0" y="174" width="3" height="22" fill="#e0201a"/>
<line x1="947.5" y1="172" x2="947.5" y2="206" stroke="#1f5ec4" stroke-width="1"/>
<rect x="946.0" y="172" width="3" height="30" fill="#1f5ec4"/>
<line x1="951.5" y1="188" x2="951.5" y2="211" stroke="#1f5ec4" stroke-width="1"/>
<rect x="950.0" y="194" width="3" height="12" fill="#1f5ec4"/>
<line x1="956.5" y1="198" x2="956.5" y2="211" stroke="#e0201a" stroke-width="1"/>
<rect x="955.0" y="201" width="3" height="9" fill="#e0201a"/>
<line x1="960.5" y1="190" x2="960.5" y2="206" stroke="#e0201a" stroke-width="1"/>
<rect x="959.0" y="199" width="3" height="5" fill="#e0201a"/>
<line x1="964.5" y1="186" x2="964.5" y2="202" stroke="#e0201a" stroke-width="1"/>
<rect x="963.0" y="189" width="3" height="12" fill="#e0201a"/>
<line x1="969.5" y1="162" x2="969.5" y2="188" stroke="#e0201a" stroke-width="1"/>
<rect x="968.0" y="175" width="3" height="11" fill="#e0201a"/>
<line x1="973.5" y1="158" x2="973.5" y2="180" stroke="#e0201a" stroke-width="1"/>
<rect x="972.0" y="166" width="3" height="8" fill="#e0201a"/>
<line x1="977.5" y1="166" x2="977.5" y2="181" stroke="#1f5ec4" stroke-width="1"/>
<rect x="976.0" y="170" width="3" height="8" fill="#1f5ec4"/>
<line x1="982.5" y1="164" x2="982.5" y2="184" stroke="#e0201a" stroke-width="1"/>
<rect x="981.0" y="175" width="3" height="7" fill="#e0201a"/>
<line x1="986.5" y1="156" x2="986.5" y2="184" stroke="#e0201a" stroke-width="1"/>
<rect x="985.0" y="161" width="3" height="10" fill="#e0201a"/>
<line x1="990.5" y1="158" x2="990.5" y2="171" stroke="#1f5ec4" stroke-width="1"/>
<rect x="989.0" y="159" width="3" height="11" fill="#1f5ec4"/>
<line x1="995.5" y1="150" x2="995.5" y2="168" stroke="#e0201a" stroke-width="1"/>
<rect x="994.0" y="154" width="3" height="14" fill="#e0201a"/>
<line x1="999.5" y1="160" x2="999.5" y2="178" stroke="#1f5ec4" stroke-width="1"/>
<rect x="998.0" y="160" width="3" height="16" fill="#1f5ec4"/>
<line x1="1003.5" y1="161" x2="1003.5" y2="206" stroke="#1f5ec4" stroke-width="1"/>
<rect x="1002.0" y="162" width="3" height="28" fill="#1f5ec4"/>
<line x1="1008.5" y1="191" x2="1008.5" y2="221" stroke="#1f5ec4" stroke-width="1"/>
<rect x="1007.0" y="192" width="3" height="26" fill="#1f5ec4"/>
<line x1="1012.5" y1="205" x2="1012.5" y2="218" stroke="#1f5ec4" stroke-width="1"/>
<rect x="1011.0" y="210" width="3" height="4" fill="#1f5ec4"/>
<line x1="1016.5" y1="210" x2="1016.5" y2="221" stroke="#1f5ec4" stroke-width="1"/>
<rect x="1015.0" y="211" width="3" height="9" fill="#1f5ec4"/>
<line x1="1021.5" y1="216" x2="1021.5" y2="228" stroke="#e0201a" stroke-width="1"/>
<rect x="1020.0" y="218" width="3" height="4" fill="#e0201a"/>
<line x1="1025.5" y1="215" x2="1025.5" y2="224" stroke="#e0201a" stroke-width="1"/>
<rect x="1024.0" y="216" width="3" height="4" fill="#e0201a"/>
<line x1="1029.5" y1="202" x2="1029.5" y2="216" stroke="#e0201a" stroke-width="1"/>
<rect x="1028.0" y="202" width="3" height="13" fill="#e0201a"/>
<line x1="1034.5" y1="196" x2="1034.5" y2="208" stroke="#e0201a" stroke-width="1"/>
<rect x="1033.0" y="198" width="3" height="7" fill="#e0201a"/>
<line x1="1038.5" y1="161" x2="1038.5" y2="204" stroke="#e0201a" stroke-width="1"/>
<rect x="1037.0" y="172" width="3" height="30" fill="#e0201a"/>
<line x1="1042.5" y1="171" x2="1042.5" y2="186" stroke="#1f5ec4" stroke-width="1"/>
<rect x="1041.0" y="172" width="3" height="7" fill="#1f5ec4"/>
<line x1="1047.5" y1="171" x2="1047.5" y2="190" stroke="#1f5ec4" stroke-width="1"/>
<rect x="1046.0" y="175" width="3" height="13" fill="#1f5ec4"/>
<line x1="1051.5" y1="180" x2="1051.5" y2="201" stroke="#1f5ec4" stroke-width="1"/>
<rect x="1050.0" y="182" width="3" height="18" fill="#1f5ec4"/>
<line x1="1055.5" y1="198" x2="1055.5" y2="210" stroke="#e0201a" stroke-width="1"/>
<rect x="1054.0" y="200" width="3" height="8" fill="#e0201a"/>
<line x1="1060.5" y1="195" x2="1060.5" y2="208" stroke="#1f5ec4" stroke-width="1"/>
<rect x="1059.0" y="201" width="3" height="5" fill="#1f5ec4"/>
<line x1="1064.5" y1="199" x2="1064.5" y2="208" stroke="#1f5ec4" stroke-width="1"/>
<rect x="1063.0" y="202" width="3" height="4" fill="#1f5ec4"/>
<line x1="1068.5" y1="204" x2="1068.5" y2="231" stroke="#1f5ec4" stroke-width="1"/>
<rect x="1067.0" y="205" width="3" height="26" fill="#1f5ec4"/>
<line x1="1073.5" y1="216" x2="1073.5" y2="238" stroke="#e0201a" stroke-width="1"/>
<rect x="1072.0" y="220" width="3" height="16" fill="#e0201a"/>
<line x1="1077.5" y1="218" x2="1077.5" y2="228" stroke="#1f5ec4" stroke-width="1"/>
<rect x="1076.0" y="219" width="3" height="2" fill="#1f5ec4"/>
<line x1="1081.5" y1="220" x2="1081.5" y2="231" stroke="#e0201a" stroke-width="1"/>
<rect x="1080.0" y="224" width="3" height="1" fill="#e0201a"/>
<line x1="1086.5" y1="220" x2="1086.5" y2="228" stroke="#1f5ec4" stroke-width="1"/>
<rect x="1085.0" y="221" width="3" height="5" fill="#1f5ec4"/>
<line x1="1090.5" y1="218" x2="1090.5" y2="226" stroke="#e0201a" stroke-width="1"/>
<rect x="1089.0" y="222" width="3" height="3" fill="#e0201a"/>
<line x1="1094.5" y1="222" x2="1094.5" y2="230" stroke="#1f5ec4" stroke-width="1"/>
<rect x="1093.0" y="224" width="3" height="3" fill="#1f5ec4"/>
<line x1="1099.5" y1="222" x2="1099.5" y2="229" stroke="#e0201a" stroke-width="1"/>
<rect x="1098.0" y="224" width="3" height="2" fill="#e0201a"/>
<line x1="1103.5" y1="216" x2="1103.5" y2="241" stroke="#1f5ec4" stroke-width="1"/>
<rect x="1102.0" y="221" width="3" height="19" fill="#1f5ec4"/>
<line x1="1107.5" y1="240" x2="1107.5" y2="254" stroke="#1f5ec4" stroke-width="1"/>
<rect x="1106.0" y="241" width="3" height="6" fill="#1f5ec4"/>
<line x1="1112.5" y1="244" x2="1112.5" y2="251" stroke="#e0201a" stroke-width="1"/>
<rect x="1111.0" y="246" width="3" height="3" fill="#e0201a"/>
<line x1="1116.5" y1="240" x2="1116.5" y2="251" stroke="#1f5ec4" stroke-width="1"/>
<rect x="1115.0" y="242" width="3" height="5" fill="#1f5ec4"/>
<line x1="1120.5" y1="246" x2="1120.5" y2="256" stroke="#e0201a" stroke-width="1"/>
<rect x="1119.0" y="249" width="3" height="3" fill="#e0201a"/>
<line x1="1125.5" y1="240" x2="1125.5" y2="252" stroke="#e0201a" stroke-width="1"/>
<rect x="1124.0" y="246" width="3" height="5" fill="#e0201a"/>
<line x1="1129.5" y1="246" x2="1129.5" y2="255" stroke="#1f5ec4" stroke-width="1"/>
<rect x="1128.0" y="247" width="3" height="5" fill="#1f5ec4"/>
<line x1="1133.5" y1="248" x2="1133.5" y2="254" stroke="#e0201a" stroke-width="1"/>
<rect x="1132.0" y="249" width="3" height="3" fill="#e0201a"/>
<line x1="1138.5" y1="246" x2="1138.5" y2="252" stroke="#e0201a" stroke-width="1"/>
<rect x="1137.0" y="249" width="3" height="2" fill="#e0201a"/>
<line x1="1142.5" y1="249" x2="1142.5" y2="266" stroke="#1f5ec4" stroke-width="1"/>
<rect x="1141.0" y="250" width="3" height="9" fill="#1f5ec4"/>
<line x1="1146.5" y1="256" x2="1146.5" y2="265" stroke="#e0201a" stroke-width="1"/>
<rect x="1145.0" y="258" width="3" height="2" fill="#e0201a"/>
<polyline points="6.0,509.5 17.5,504.5 50.0,504.5 100.0,505.5 140.0,506.0 165.0,506.0 172.5,510.0 207.5,512.5 214.0,518.0 230.0,519.0 242.5,515.5 275.0,515.0 300.0,514.5 315.0,510.5 332.5,506.0 355.0,506.0 360.0,520.0 372.5,530.0 387.5,535.0 410.0,536.0 416.0,547.5 430.0,552.5 445.0,554.0 460.0,556.0 475.0,560.0 492.5,562.5 512.5,562.5 537.5,561.0 565.0,560.0 577.5,556.0 590.0,554.0 600.0,554.0 615.0,557.0 630.0,559.5 645.0,561.0 652.5,565.0 657.5,561.0 670.0,569.0 685.0,574.5 705.0,576.0 714.0,579.0 719.0,572.5 722.5,554.0 730.0,553.0 736.0,559.5 744.0,562.5 750.0,575.0 756.0,578.0 765.0,567.5 770.0,575.0 775.0,562.5 782.5,556.0 787.5,562.5 800.0,550.0 805.0,535.0 815.0,526.0 819.0,522.5 825.0,524.0 832.5,521.0 839.0,515.0 844.0,519.0 847.5,516.0 852.5,520.0 860.0,516.0 875.0,514.5 881.0,517.5 886.0,529.0 891.0,520.0 895.0,524.0 902.5,520.0 911.0,530.0 925.0,527.4 930.7,538.6 937.6,540.0 942.4,551.0 947.4,537.0 958.6,533.5 967.0,542.7 974.0,548.0 983.7,549.7 990.6,547.0 997.6,551.0 1017.0,551.0 1028.0,544.0 1034.0,547.0 1038.0,556.7 1045.0,547.0 1052.0,537.0 1061.7,533.0 1067.3,524.6 1074.3,528.8 1081.0,527.4 1095.0,530.0 1102.0,524.6 1109.0,527.4 1116.0,527.0 1123.0,531.6 1134.0,534.4 1140.0,532.0 1145.4,534.4" fill="none" stroke="#2e9463" stroke-width="2.8" stroke-linejoin="round" stroke-linecap="round"/>
<polyline points="6.0,547.0 25.0,549.0 50.0,550.0 87.5,546.0 112.5,547.0 140.0,550.0 164.0,552.5 175.0,549.0 207.5,546.0 215.0,541.0 234.0,538.0 240.0,545.5 275.0,545.5 300.0,548.0 325.0,551.0 345.0,555.0 355.0,555.0 362.5,542.5 372.5,534.0 392.5,531.0 410.0,534.0 417.5,522.5 425.0,514.0 437.5,506.0 447.5,511.0 460.0,510.0 472.5,505.0 485.0,506.0 494.0,504.0 505.0,507.0 515.0,505.0 535.0,505.0 550.0,510.0 565.0,514.0 575.0,520.0 585.0,517.5 595.0,519.0 612.0,517.0 625.0,516.0 645.0,516.0 652.5,514.0 659.0,518.0 675.0,515.0 700.0,514.5 714.0,514.0 719.0,521.0 722.5,550.0 730.0,541.0 736.0,536.0 744.0,535.0 750.0,522.5 754.0,526.0 757.5,522.5 762.5,539.0 770.0,534.0 777.5,535.0 786.0,531.0 794.0,541.0 800.0,544.0 805.0,555.0 810.0,559.0 820.0,554.0 827.5,557.5 834.0,559.5 840.0,565.0 850.0,565.0 860.0,561.0 869.0,564.5 872.5,564.0 879.0,570.0 882.5,570.0 887.5,562.5 896.0,559.0 902.5,561.0 908.0,562.0 921.0,558.0 925.0,561.4 935.0,545.5 942.0,543.6 951.6,551.0 958.6,551.0 972.5,540.0 986.4,535.8 997.6,532.0 1006.0,541.0 1017.0,545.5 1031.0,548.0 1045.0,547.0 1052.0,552.5 1061.7,558.0 1067.3,565.0 1084.0,566.4 1092.4,566.4 1100.8,570.6 1112.0,573.4 1120.0,576.0 1134.0,577.0 1140.0,579.0 1145.4,579.5" fill="none" stroke="#3366ee" stroke-width="2.8" stroke-linejoin="round" stroke-linecap="round"/>
<polyline points="6.0,574.5 17.5,578.0 37.5,578.0 52.5,576.0 82.5,579.5 107.5,579.0 117.5,576.0 150.0,574.0 172.5,570.5 207.5,570.0 215.0,566.0 234.0,571.0 240.0,567.0 250.0,569.5 275.0,570.0 300.0,569.0 312.5,571.0 325.0,569.0 335.0,571.0 352.5,570.0 362.5,561.0 377.5,560.0 392.5,555.0 410.0,553.0 416.0,549.0 422.5,553.0 432.5,554.5 437.5,557.5 447.5,550.5 460.0,548.0 475.0,549.0 490.0,546.0 507.5,545.5 535.0,547.0 550.0,544.5 562.5,541.0 575.0,540.5 587.5,544.5 600.0,544.0 617.5,542.0 632.5,540.0 647.5,538.0 654.0,535.0 659.0,537.0 666.0,530.0 675.0,527.5 687.5,522.5 700.0,520.5 711.0,519.5 717.5,516.0 720.0,517.5 727.5,522.5 737.5,519.0 747.5,517.0 752.5,509.0 756.0,511.0 761.0,504.0 765.0,512.5 770.0,504.0 775.0,521.0 785.0,529.0 790.0,521.0 795.0,522.5 800.0,530.0 810.0,536.0 817.5,549.0 826.0,552.5 834.0,545.5 839.0,550.0 846.0,545.5 850.0,547.5 852.5,544.5 860.0,551.0 867.5,548.0 872.5,550.0 877.5,541.0 886.0,535.0 891.0,544.0 895.0,542.5 900.0,547.0 907.5,539.0 911.0,534.4 922.3,540.0 933.5,535.8 938.0,540.0 942.4,524.6 948.8,537.0 958.6,541.3 971.0,532.0 978.0,534.4 985.0,533.0 992.0,537.7 997.6,537.0 1006.0,526.0 1020.0,524.6 1028.0,530.0 1034.0,528.8 1037.0,515.0 1043.6,523.0 1052.0,533.0 1061.7,532.0 1067.3,537.0 1078.5,532.0 1095.0,530.0 1102.0,533.0 1107.7,529.6 1116.0,528.8 1123.0,522.0 1131.5,517.6 1140.0,515.7 1145.4,513.5" fill="none" stroke="#e01018" stroke-width="2.9" stroke-linejoin="round" stroke-linecap="round"/>
<rect x="8" y="58" width="4" height="5" fill="#b0b0b0" stroke="#8c8c8c" stroke-width="0.8"/>
<rect x="15.5" y="53.5" width="76" height="14" fill="#ececec" stroke="#c4c4c4" stroke-width="1"/>
<text x="18" y="65" fill="#222" font-size="13.5" text-anchor="start" textLength="72" lengthAdjust="spacingAndGlyphs">한국가스공사</text>
<rect x="96" y="58" width="4" height="5" fill="#b0b0b0" stroke="#8c8c8c" stroke-width="0.8"/>
<text x="106" y="65" fill="#c81e28" font-size="13.5" text-anchor="start" textLength="62" lengthAdjust="spacingAndGlyphs">종가 단순 5</text>
<text x="177" y="65" fill="#d89a28" font-size="13.5" text-anchor="start" textLength="12" lengthAdjust="spacingAndGlyphs">10</text>
<text x="196" y="65" fill="#f4f44a" font-size="13.5" text-anchor="start" textLength="12" lengthAdjust="spacingAndGlyphs">20</text>
<text x="216" y="65" fill="#2a8a4a" font-size="13.5" text-anchor="start" textLength="12" lengthAdjust="spacingAndGlyphs">60</text>
<text x="237" y="65" fill="#3a6ab8" font-size="13.5" text-anchor="start" textLength="17" lengthAdjust="spacingAndGlyphs">120</text>
<rect x="9.5" y="71.5" width="13" height="13" fill="#fff" stroke="#222" stroke-width="1"/>
<rect x="11.5" y="73.5" width="9" height="9" fill="#ddd" stroke="#444" stroke-width="1"/>
<path d="M14.5 73.5v9M17.5 73.5v9M11.5 76.5h9M11.5 79.5h9" stroke="#444" stroke-width="1" fill="none"/>
<text x="641" y="77" fill="#d01820" font-size="13.5" text-anchor="start" textLength="106" lengthAdjust="spacingAndGlyphs">최고 64,500 (06/20)</text>
<path d="M751 73.5h12" stroke="#d01820" stroke-width="1.2"/><path d="M768 73.5l-6-4.5v9z" fill="#d01820"/>
<text x="92" y="385" fill="#14148c" font-size="13.5" text-anchor="start" textLength="104" lengthAdjust="spacingAndGlyphs">최저 22,750 (10/24)</text>
<path d="M77 381.5l6-4.5v9z" fill="#1c20c0"/><path d="M82 381.5h10" stroke="#1c20c0" stroke-width="1.2"/>
<text x="230" y="344" fill="#222" font-size="13.5" text-anchor="start" textLength="78" lengthAdjust="spacingAndGlyphs">배당락(0,00%)</text>
<path d="M269.5 348v14" stroke="#e01818" stroke-width="1.2"/><path d="M269.5 368l-5-6h10z" fill="#e01818"/>
<rect x="8" y="409" width="4" height="5" fill="#b0b0b0" stroke="#8c8c8c" stroke-width="0.8"/>
<text x="18" y="417" fill="#3a8a8a" font-size="13.5" text-anchor="start" textLength="35" lengthAdjust="spacingAndGlyphs">거래량</text>
<text x="8" y="430" fill="#222" font-size="13.5" text-anchor="start" textLength="99" lengthAdjust="spacingAndGlyphs">365,540주(29,14%)</text>
<rect x="8" y="497" width="4" height="5" fill="#b0b0b0" stroke="#8c8c8c" stroke-width="0.8"/>
<text x="18" y="504.5" fill="#d01820" font-size="13.5" text-anchor="start" textLength="84" lengthAdjust="spacingAndGlyphs">외국인보유수량</text>
<rect x="108" y="497" width="4" height="5" fill="#b0b0b0" stroke="#8c8c8c" stroke-width="0.8"/>
<text x="118" y="504.5" fill="#3a62c8" font-size="13.5" text-anchor="start" textLength="71" lengthAdjust="spacingAndGlyphs">기관보유수량</text>
<rect x="196" y="497" width="4" height="5" fill="#b0b0b0" stroke="#8c8c8c" stroke-width="0.8"/>
<text x="206" y="504.5" fill="#2e9463" font-size="13.5" text-anchor="start" textLength="71" lengthAdjust="spacingAndGlyphs">개인보유수량</text>
<text x="1180" y="63" fill="#d01820" font-size="13.5" text-anchor="start" textLength="48" lengthAdjust="spacingAndGlyphs">LC:73,19</text>
<text x="1180" y="76" fill="#2a5ab8" font-size="13.5" text-anchor="start" textLength="54" lengthAdjust="spacingAndGlyphs">HC:-38,91</text>
<text x="1187" y="106.5" fill="#444" font-size="13.5" text-anchor="start" textLength="34" lengthAdjust="spacingAndGlyphs">60,000</text>
<text x="1187" y="144.2" fill="#444" font-size="13.5" text-anchor="start" textLength="34" lengthAdjust="spacingAndGlyphs">55,000</text>
<text x="1187" y="182.0" fill="#444" font-size="13.5" text-anchor="start" textLength="34" lengthAdjust="spacingAndGlyphs">50,000</text>
<text x="1187" y="219.8" fill="#444" font-size="13.5" text-anchor="start" textLength="34" lengthAdjust="spacingAndGlyphs">45,000</text>
<text x="1187" y="257.5" fill="#444" font-size="13.5" text-anchor="start" textLength="34" lengthAdjust="spacingAndGlyphs">40,000</text>
<text x="1187" y="295.2" fill="#444" font-size="13.5" text-anchor="start" textLength="34" lengthAdjust="spacingAndGlyphs">35,000</text>
<text x="1187" y="333.0" fill="#444" font-size="13.5" text-anchor="start" textLength="34" lengthAdjust="spacingAndGlyphs">30,000</text>
<text x="1187" y="370.8" fill="#444" font-size="13.5" text-anchor="start" textLength="34" lengthAdjust="spacingAndGlyphs">25,000</text>
<rect x="1184" y="251.5" width="58" height="12" fill="#1f5ec4"/>
<text x="1187" y="262" fill="#fff" font-size="13.5" text-anchor="start" textLength="34" lengthAdjust="spacingAndGlyphs">39,400</text>
<text x="1188" y="274" fill="#2a5ab8" font-size="13.5" text-anchor="start" textLength="36" lengthAdjust="spacingAndGlyphs">-0,25%</text>
<text x="1188" y="428" fill="#444" font-size="13.5" text-anchor="start" textLength="41" lengthAdjust="spacingAndGlyphs">30,000K</text>
<text x="1188" y="449" fill="#444" font-size="13.5" text-anchor="start" textLength="41" lengthAdjust="spacingAndGlyphs">20,000K</text>
<text x="1188" y="470" fill="#444" font-size="13.5" text-anchor="start" textLength="41" lengthAdjust="spacingAndGlyphs">10,000K</text>
<rect x="1184" y="464.5" width="58" height="12" fill="#1f5ec4"/>
<text x="1186" y="475" fill="#fff" font-size="13.5" text-anchor="start" textLength="40" lengthAdjust="spacingAndGlyphs">365,540</text>
<text x="1188" y="487" fill="#2a5ab8" font-size="13.5" text-anchor="start" textLength="36" lengthAdjust="spacingAndGlyphs">29,14%</text>
<text x="1186" y="536.5" fill="#444" font-size="13.5" text-anchor="start" textLength="51" lengthAdjust="spacingAndGlyphs">8,000,000</text>
<text x="1186" y="574.5" fill="#444" font-size="13.5" text-anchor="start" textLength="51" lengthAdjust="spacingAndGlyphs">6,000,000</text>
<rect x="1234" y="406.5" width="8" height="7" fill="#555"/><path d="M1236 408.5l4 3M1240 408.5l-4 3" stroke="#eee" stroke-width="1"/>
<rect x="1234" y="493.5" width="8" height="7" fill="#555"/><path d="M1236 495.5l4 3M1240 495.5l-4 3" stroke="#eee" stroke-width="1"/>
<text x="5" y="596" fill="#333" font-size="13.5" text-anchor="start" textLength="42" lengthAdjust="spacingAndGlyphs">2023/09</text>
<text x="100" y="596" fill="#333" font-size="13.5" text-anchor="start" textLength="10" lengthAdjust="spacingAndGlyphs">11</text>
<text x="195" y="596" fill="#333" font-size="13.5" text-anchor="start" textLength="11" lengthAdjust="spacingAndGlyphs">12</text>
<text x="277" y="596" fill="#333" font-size="13.5" text-anchor="start" textLength="42" lengthAdjust="spacingAndGlyphs">2024/01</text>
<text x="372" y="596" fill="#333" font-size="13.5" text-anchor="start" textLength="11" lengthAdjust="spacingAndGlyphs">02</text>
<text x="454" y="596" fill="#333" font-size="13.5" text-anchor="start" textLength="11" lengthAdjust="spacingAndGlyphs">03</text>
<text x="541" y="596" fill="#333" font-size="13.5" text-anchor="start" textLength="11" lengthAdjust="spacingAndGlyphs">04</text>
<text x="631" y="596" fill="#333" font-size="13.5" text-anchor="start" textLength="11" lengthAdjust="spacingAndGlyphs">05</text>
<text x="718" y="596" fill="#333" font-size="13.5" text-anchor="start" textLength="11" lengthAdjust="spacingAndGlyphs">06</text>
<text x="800" y="596" fill="#333" font-size="13.5" text-anchor="start" textLength="11" lengthAdjust="spacingAndGlyphs">07</text>
<text x="899" y="596" fill="#333" font-size="13.5" text-anchor="start" textLength="11" lengthAdjust="spacingAndGlyphs">08</text>
<text x="990" y="596" fill="#333" font-size="13.5" text-anchor="start" textLength="11" lengthAdjust="spacingAndGlyphs">09</text>
<text x="1067" y="596" fill="#333" font-size="13.5" text-anchor="start" textLength="10" lengthAdjust="spacingAndGlyphs">10</text>
<text x="1187" y="596" fill="#333" font-size="13.5" text-anchor="start" textLength="30" lengthAdjust="spacingAndGlyphs">10/30</text></svg>
<div class="a btn" style="left:3px;width:19px;line-height:0"><svg width="17" height="17" viewBox="0 0 17 17"><rect x="5.500" y="3.500" width="10" height="12" fill="#fff" stroke="#333"/><rect x="5.500" y="3.500" width="10" height="2.500" fill="#333"/><path d="M2.500 8l4.500 4-4.500 4z" fill="#333"/></svg></div><div class="a btn w" style="left:24px;width:18px;border-right-color:#ccc">주</div><div class="a btn" style="left:41px;width:15px;line-height:0;border-left:none"><svg width="13" height="17"><path d="M3 7h6.500l-3.250 4z" fill="#666"/></svg></div><div class="a btn" style="left:57px;width:20px;">전</div><div class="a btn w" style="left:78px;width:55px;border-right-color:#ccc"><span style="background:#1c66c4;color:#dbe8f8;letter-spacing:-0.6px;position:absolute;left:2px;top:3px;height:12px;line-height:12px;width:37px;text-align:left;font-size:12px">036460</span></div><div class="a btn" style="left:132px;width:15px;line-height:0;border-left:none"><svg width="13" height="17"><path d="M3.5 7h6.500l-3.250 4z" fill="#666"/></svg></div><div class="a btn" style="left:146px;width:20px;line-height:0;border-left-color:#ccc"><svg width="18" height="17"><circle cx="7.500" cy="7" r="4.200" fill="none" stroke="#666" stroke-width="1.500"/><path d="M10.500 10l4.500 4.500" stroke="#666" stroke-width="2.200"/></svg></div><div class="a btn" style="left:167px;width:18px;line-height:0"><svg width="16" height="17"><path d="M2 6.500h3l4-3.500v11l-4-3.500h-3z" fill="#666"/><path d="M11 6h1.500M11 8.500h1.500M11 11h1.500M13.500 7.200h1M13.500 9.800h1" stroke="#666" stroke-width="1.300"/></svg></div><div class="a btn" style="left:184px;width:11px;line-height:0;border-left-color:#ccc"><svg width="9" height="17"><path d="M1.500 7.500h6l-3 3.500z" fill="#555"/></svg></div><div class="a btn w" style="left:196px;width:82px;text-align:left"><span style="position:absolute;left:1px;top:1px;width:16px;height:15px;background:#92a43a;color:#fff;line-height:15px">신</span><span style="position:absolute;left:19px;top:0;letter-spacing:-0.3px">한국가스공</span><svg style="position:absolute;right:0;bottom:0" width="6" height="6"><path d="M6 0v6h-6z" fill="#9aa"/></svg></div><div class="a btn" style="left:279px;width:20px;background:#4a82c8;color:#fff;border-color:#4a82c8">일</div><div class="a btn" style="left:298px;width:20px;">주</div><div class="a btn" style="left:317px;width:20px;">월</div><div class="a btn" style="left:336px;width:20px;">년</div><div class="a btn" style="left:357px;width:20px;">분</div><div class="a btn" style="left:376px;width:20px;">초</div><div class="a btn" style="left:395px;width:20px;">틱</div><div class="a btn" style="left:416px;width:20px;color:#888;letter-spacing:-0.8px;background:#eee;border-color:#b4b4b4;font-size:12px">1</div><div class="a btn" style="left:435px;width:20px;color:#888;letter-spacing:-0.8px;background:#eee;border-color:#b4b4b4;font-size:12px">3</div><div class="a btn" style="left:454px;width:20px;color:#888;letter-spacing:-0.8px;background:#eee;border-color:#b4b4b4;font-size:12px">5</div><div class="a btn" style="left:473px;width:20px;color:#888;letter-spacing:-0.8px;background:#eee;border-color:#b4b4b4;font-size:12px">10</div><div class="a btn" style="left:492px;width:20px;color:#888;letter-spacing:-0.8px;background:#eee;border-color:#b4b4b4;font-size:12px">20</div><div class="a btn" style="left:511px;width:20px;color:#888;letter-spacing:-0.8px;background:#eee;border-color:#b4b4b4;font-size:12px">30</div><div class="a btn" style="left:530px;width:20px;color:#888;letter-spacing:-0.8px;background:#eee;border-color:#b4b4b4;font-size:12px">60</div><div class="a btn" style="left:549px;width:21px;color:#888;letter-spacing:-0.8px;background:#eee;border-color:#b4b4b4;font-size:12px">120</div><div class="a btn" style="left:571px;width:25px;background:#e6e6e6;border-color:#bbb"></div><div class="a btn" style="left:595px;width:14px;line-height:0;background:#e6e6e6;border-color:#bbb"><svg width="12" height="17"><path d="M2.500 7.500h6l-3 3.500z" fill="#aaa"/></svg></div><div class="a btn w" style="left:611px;width:29px;text-align:right;padding-right:2px;letter-spacing:-0.6px;font-size:12px">265</div><div class="a a" style="left:641px;width:24px;top:7px;line-height:17px;letter-spacing:-0.5px;color:#333">/600</div><div class="a btn" style="left:675px;width:20px;line-height:0;border-color:#999"><svg width="18" height="17"><path d="M4.500 2v9M9.500 2v9" stroke="#666"/><rect x="3" y="4" width="3" height="5" fill="#555"/><rect x="8" y="4" width="3" height="5" fill="#999"/><path d="M10.500 13.500l3-2.500v5z" fill="#333"/><path d="M12.500 13.500h3.500" stroke="#333" stroke-width="1.500"/></svg></div><div class="a btn" style="left:694px;width:20px;line-height:0;border-color:#999"><svg width="18" height="17"><path d="M1 6l3-3 5 6 5-6" fill="none" stroke="#777"/><path d="M3 3l5 6 4-5 3 3" fill="none" stroke="#999"/><path d="M10 13h6M13 10v6" stroke="#333" stroke-width="1.8"/></svg></div><div class="a btn" style="left:713px;width:20px;line-height:0;border-color:#999"><svg width="18" height="17"><rect x="2.500" y="2.500" width="13" height="12" fill="#e4e4e4" stroke="#777"/><rect x="5.500" y="2.500" width="7" height="4" fill="#f4f4f4" stroke="#777"/><rect x="4.500" y="9.500" width="9" height="5" fill="#f4f4f4" stroke="#777"/></svg></div><div class="a btn" style="left:732px;width:20px;line-height:0;border-color:#999"><svg width="18" height="17"><circle cx="9" cy="8.500" r="4.300" fill="none" stroke="#666" stroke-width="2.600" stroke-dasharray="2.250 1.130"/><circle cx="9" cy="8.500" r="3.300" fill="none" stroke="#666" stroke-width="1.800"/></svg></div><div class="a btn w" style="left:753px;width:65px;letter-spacing:-0.05px;text-align:left;padding-left:3px;font-size:12px;border-color:#999">2024/10/30</div><div class="a btn" style="left:817px;width:20px;line-height:0;border-color:#999"><svg width="18" height="17"><rect x="3.500" y="4.500" width="11" height="9" fill="#fff" stroke="#444"/><rect x="3.500" y="4.500" width="11" height="2.500" fill="#444"/><path d="M7.500 7v6M10.500 7v6M4 10.500h10" stroke="#888"/></svg></div><div class="a" style="left:3px;top:28px;width:733px;height:20px;background:#eeeff3;border:1px solid #8e8e8e;border-bottom-color:#9a9a9a"></div><div class="a" style="left:175px;top:29px;width:1px;height:18px;background:#b4b4b4"></div><div class="a" style="left:346px;top:29px;width:1px;height:18px;background:#b4b4b4"></div><div class="a" style="left:428px;top:29px;width:1px;height:18px;background:#b4b4b4"></div><div class="a" style="left:551px;top:29px;width:1px;height:18px;background:#b4b4b4"></div><div class="a t2 bl" style="left:27px;">39,400</div><div class="a" style="left:67px;top:34px;width:0;height:0;border-left:5px solid transparent;border-right:5px solid transparent;border-top:9px solid #1c3ec0"></div><div class="a t2 bl" style="left:107px;">100</div><div class="a t2 bl" style="left:137px;">-0.25%</div><div class="a t2 " style="left:203px;">365,540</div><div class="a t2 bl" style="left:267px;">29.14%</div><div class="a t2 " style="left:313px;">0.40%</div><div class="a t2 " style="left:366px;">14,316백만</div><div class="a t2 " style="left:431px;">호가</div><div class="a t2 bl" style="left:462px;">39,400</div><div class="a t2 bl" style="left:512px;">39,300</div><div class="a t2 " style="left:556px;">시</div><div class="a t2 bl" style="left:573px;">39,250</div><div class="a t2 " style="left:617px;">고</div><div class="a t2 " style="left:635px;">39,500</div><div class="a t2 " style="left:678px;">저</div><div class="a t2 bl" style="left:695px;">38,600</div><div class="a btn" style="left:738px;top:28px;width:37px;height:20px;line-height:18px;background:#f6d0ca;border-color:#b0a0a0">매수</div><div class="a btn" style="left:777px;top:28px;width:38px;height:20px;line-height:18px;background:#c9ddf6;border-color:#98a8c0">매도</div><div class="a btn" style="left:818px;top:28px;width:18px;height:20px;line-height:18px">평</div>
<div class="a" style="left:0;top:601px;width:1248px;height:20px;background:#ececec"></div><div class="a" style="left:3px;top:601px;width:874px;height:17px;background:#f4f4f4;background-image:repeating-conic-gradient(#eeeeee 0 25%,#f8f8f8 0 50%);background-size:2px 2px"></div><div class="a" style="left:3px;top:602px;width:16px;height:16px;background:#f0f0f0;border:1px solid #fff;border-right-color:#777;border-bottom-color:#777"><svg width="14" height="14"><path d="M9 3v8l-5-4z" fill="#000"/></svg></div><div class="a" style="left:499px;top:601px;width:377px;height:17px;background:#ececec;border-left:1px solid #f8f8f8;border-right:1px solid #777;border-bottom:2px solid #666"></div><div class="a" style="left:877px;top:602px;width:16px;height:16px;background:#f2f2f2;border:1px solid #fff;border-right-color:#777;border-bottom-color:#777"><svg width="14" height="14"><path d="M5 3v8l5-4z" fill="#000"/></svg></div><div class="a" style="left:893px;top:602px;width:16px;height:16px;background:#f2f2f2;border:1px solid #fff;border-right-color:#777;border-bottom-color:#777"><svg width="14" height="14"><path d="M7 3v8l-4.5-4zM11.5 3v8l-4.5-4z" fill="#000"/></svg></div><div class="a" style="left:909px;top:602px;width:16px;height:16px;background:#f2f2f2;border:1px solid #fff;border-right-color:#777;border-bottom-color:#777"><svg width="14" height="14"><rect x="4" y="4" width="7" height="7" fill="#000"/></svg></div><div class="a" style="left:926px;top:602px;width:16px;height:16px;background:#f2f2f2;border:1px solid #fff;border-right-color:#777;border-bottom-color:#777"><svg width="14" height="14"><path d="M3 3v8l4.5-4zM7.5 3v8l4.5-4z" fill="#000"/></svg></div><svg class="a" style="left:945px;top:601px" width="78" height="20"><path d="M4 5.5h68" stroke="#888" stroke-width="1"/><path d="M4 6.5h68" stroke="#fff" stroke-width="1"/><path d="M36.5 2v8l-1.5 2" stroke="#666" stroke-width="1.4" fill="none"/><path d="M6.5 14v3" stroke="#333"/><path d="M12.4 14v3" stroke="#333"/><path d="M18.3 14v3" stroke="#333"/><path d="M24.2 14v3" stroke="#333"/><path d="M30.1 14v3" stroke="#333"/><path d="M36.0 14v3" stroke="#333"/><path d="M41.9 14v3" stroke="#333"/><path d="M47.8 14v3" stroke="#333"/><path d="M53.7 14v3" stroke="#333"/><path d="M59.6 14v3" stroke="#333"/><path d="M65.5 14v3" stroke="#333"/><path d="M71.4 14v3" stroke="#333"/></svg><svg class="a" style="left:1026px;top:602px;" width="15" height="17" viewBox="0 0 15 17"><rect x="0.5" y="1.5" width="10" height="10" fill="#f6f6f6" stroke="#a8a8a8"/><rect x="6.5" y="7.5" width="6" height="6" fill="#fff" stroke="#555"/><path d="M9.5 7.5v6M6.5 10.5h6" stroke="#555"/></svg><svg class="a" style="left:1043px;top:602px;" width="15" height="17" viewBox="0 0 15 17"><rect x="0.5" y="1.5" width="9" height="8" fill="#f6f6f6" stroke="#a8a8a8"/><rect x="4.5" y="5.5" width="8" height="8" fill="#fff" stroke="#555"/><path d="M5 6.5h7" stroke="#aaa" stroke-width="2"/></svg><svg class="a" style="left:1059px;top:602px;" width="17" height="17" viewBox="0 0 17 17"><path d="M1 2.5h11M1 12.500h11" stroke="#777" stroke-dasharray="1.2 1.2"/><path d="M14.500 2.5l-3-2v4zM14.500 12.500l-3-2v4z" fill="#777"/><path d="M2 9l3-3 3 3 5-4" stroke="#aaa" fill="none"/></svg><svg class="a" style="left:1075px;top:602px;" width="17" height="17" viewBox="0 0 17 17"><rect x="0" y="0" width="17" height="17" fill="#fbfbfb"/><path d="M0.500 0v17" stroke="#888"/><path d="M0 0.500h17" stroke="#bbb"/><path d="M4 5.500h12M7.500 2v13" stroke="#555" fill="none"/><path d="M14 13l-5-5" stroke="#888" stroke-width="1.3"/><path d="M8.500 7.500h4l-4 4z" fill="#888"/></svg><svg class="a" style="left:1094px;top:602px;" width="15" height="17" viewBox="0 0 15 17"><path d="M0 5.500h13" stroke="#888"/><path d="M1 13l3-4 2 1 2-4 3 6 2-3" stroke="#999" fill="none"/></svg><svg class="a" style="left:1110px;top:602px;" width="16" height="17" viewBox="0 0 16 17"><path d="M5.500 0v15" stroke="#555"/><path d="M1 12l4-5 3 6 3-7 4 4" stroke="#999" fill="none"/></svg><svg class="a" style="left:1127px;top:602px;" width="16" height="17" viewBox="0 0 16 17"><path d="M1 13l9-12" stroke="#555" stroke-width="1.3" fill="none"/><path d="M2 13l5-6 2 5 3-5 3 3" stroke="#999" fill="none"/></svg><svg class="a" style="left:1144px;top:602px;" width="16" height="17" viewBox="0 0 16 17"><path d="M1.500 6.500l4-4h6l-4 4zM1.500 6.500v4h6v-4M7.500 10.500l4-4v-4" stroke="#999" fill="#f4f4f4"/><path d="M7.500 15v-3M9.500 15v-4M11.500 15v-4M13.500 15v-4" stroke="#444"/></svg><svg class="a" style="left:1161px;top:602px;" width="15" height="17" viewBox="0 0 15 17"><rect x="4.500" y="1.500" width="9" height="7" fill="#eee" stroke="#999"/><rect x="1.500" y="6.500" width="9" height="7" fill="#fff" stroke="#444" stroke-width="1.2"/><path d="M3 12l2-2 2 1 3-3" stroke="#555" fill="none"/></svg><svg class="a" style="left:1179px;top:602px;" width="15" height="17" viewBox="0 0 15 17"><circle cx="5.600" cy="6.300" r="4.100" fill="none" stroke="#555" stroke-width="1.300"/><path d="M8.500 9.500l4 3.500" stroke="#555" stroke-width="1.800"/></svg><svg class="a" style="left:1197px;top:602px;" width="12" height="17" viewBox="0 0 12 17"><path d="M1.500 7.800h9" stroke="#666" stroke-width="1.800"/></svg><svg class="a" style="left:1214px;top:602px;" width="13" height="17" viewBox="0 0 13 17"><path d="M1.500 7.800h10M6.500 2.700v10.300" stroke="#444" stroke-width="1.900"/></svg><div class="a" style="left:1231px;top:601px;width:12px;font-weight:bold;font-size:13px;line-height:17px;color:#555">A</div>
</body></html>
